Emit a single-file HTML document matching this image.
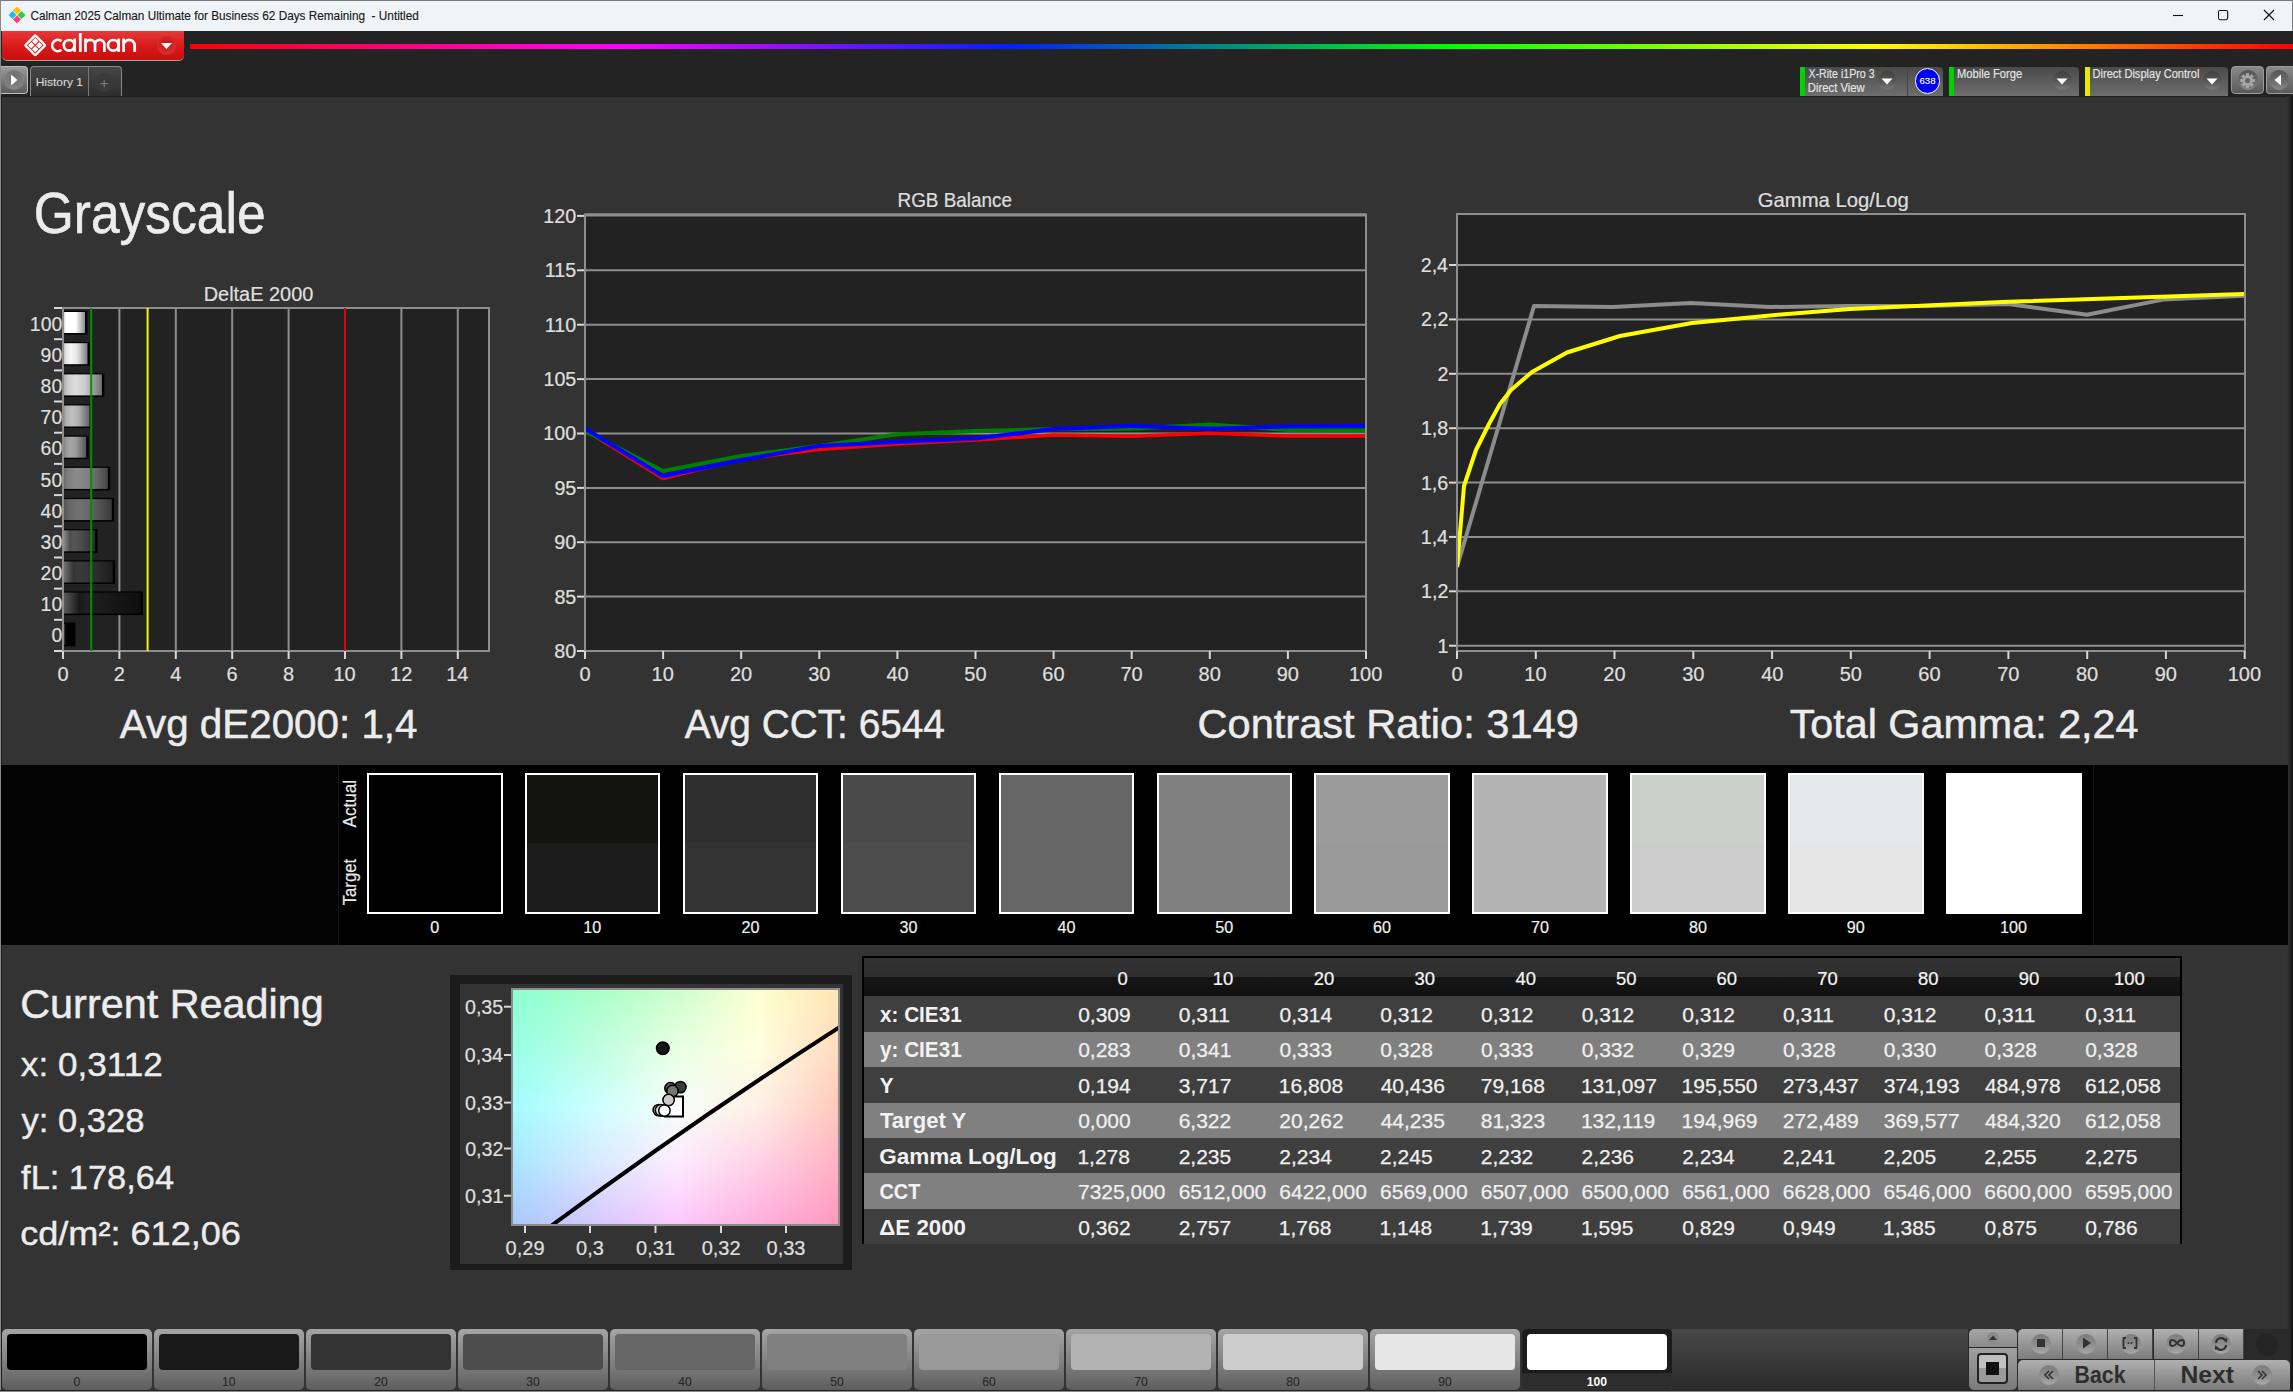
<!DOCTYPE html>
<html><head><meta charset="utf-8"><title>Calman</title>
<style>
*{margin:0;padding:0;box-sizing:border-box}
html,body{width:2293px;height:1392px;overflow:hidden;background:#333;font-family:"Liberation Sans", sans-serif}
.abs{position:absolute}
.t{position:absolute;white-space:nowrap;line-height:1}
</style></head><body>

<div class="abs" style="left:0;top:0;width:2293px;height:31px;background:#eff4f9;border-top:1px solid #7a7a7a;border-left:1px solid #8a8a8a"></div>
<svg class="abs" style="left:8px;top:6px" width="18" height="18" viewBox="0 0 18 18">
<path d="M9 0.5 L13 4.5 L9 8.5 L5 4.5Z" fill="#ffc000"/>
<path d="M4.5 5 L8.5 9 L4.5 13 L0.5 9Z" fill="#29b6f6"/>
<path d="M13.5 5 L17.5 9 L13.5 13 L9.5 9Z" fill="#2ecc40"/>
<path d="M9 9.5 L13 13.5 L9 17.5 L5 13.5Z" fill="#ff3d7f"/>
</svg>
<svg class="abs" style="left:2160px;top:0" width="133" height="31" viewBox="2160 0 133 31">
<line x1="2173" y1="15.5" x2="2183" y2="15.5" stroke="#111" stroke-width="1.1"/>
<rect x="2218.5" y="10.5" width="9.2" height="9.2" rx="1.6" fill="none" stroke="#111" stroke-width="1.1"/>
<path d="M2264 10 L2274 20 M2274 10 L2264 20" stroke="#111" stroke-width="1.2"/>
</svg>
<div class="abs" style="left:2292px;top:0;width:1px;height:31px;background:#7a7a7a"></div>
<div class="abs" style="left:0;top:31px;width:2293px;height:65px;background:#232323"></div>
<div class="abs" style="left:2px;top:31px;width:182px;height:30px;border-radius:0 0 5px 5px;background:linear-gradient(#e43a3a,#d81818 55%,#c80f0f);border-bottom:1px solid #a0a0a0"></div>
<svg class="abs" style="left:0;top:31px" width="184" height="30" viewBox="0 31 184 30">
<g transform="translate(35.2,45.3) rotate(45)">
<rect x="-7.1" y="-7.1" width="14.2" height="14.2" fill="none" stroke="#fff" stroke-width="2.4" rx="0.8"/>
<rect x="-5.1" y="-5.1" width="4.6" height="4.6" fill="#fff"/>
<rect x="0.5" y="-5.1" width="4.6" height="4.6" fill="#fff"/>
<rect x="-5.1" y="0.5" width="4.6" height="4.6" fill="#fff"/>
<rect x="0.5" y="0.5" width="4.6" height="4.6" fill="#fff"/>
</g>
<g fill="none" stroke="#fff" stroke-width="2.7">
<path d="M61.48 41.12 A5.65 5.65 0 1 0 61.48 49.78"/>
<circle cx="69.1" cy="45.3" r="5.3"/><path d="M74.6 38.6 V51.9"/>
<path d="M80.3 33 V51.9"/>
<path d="M85.5 38.6 V51.9 M85.5 44.6 A4.75 4.75 0 0 1 95 44.6 V51.9 M95 44.6 A4.7 4.7 0 0 1 104.4 44.6 V51.9"/>
<circle cx="113.3" cy="45.3" r="5.3"/><path d="M118.7 38.6 V51.9"/>
<path d="M123.6 38.6 V51.9 M123.6 45.35 A5.55 5.55 0 0 1 134.7 45.35 V51.9"/>
</g></svg>
<div class="abs" style="left:157px;top:36px;width:19px;height:19px;border-radius:50%;background:radial-gradient(circle at 50% 35%,#c81818,#e23535)"></div>
<svg class="abs" style="left:160px;top:42px" width="13" height="8"><path d="M1 1 L12 1 L6.5 7Z" fill="#fff"/></svg>
<div class="abs" style="left:190px;top:43.5px;width:2103px;height:5px;background:linear-gradient(90deg,#ff0000 0%,#ff00ff 20.4%,#0020ff 39%,#00ff00 60%,#ffff00 80%,#ff0000 100%)"></div>
<div class="abs" style="left:0;top:66px;width:28px;height:28px;border-radius:0 4px 4px 0;background:linear-gradient(#9a9a9a,#5c5c5c);border:1px solid #bdbdbd;border-left:none"></div>
<div class="abs" style="left:4px;top:70px;width:20px;height:20px;border-radius:50%;background:radial-gradient(circle at 50% 30%,#6e6e6e,#8a8a8a)"></div>
<svg class="abs" style="left:10px;top:74px" width="8" height="12"><path d="M1 0.5 L7.5 6 L1 11.5Z" fill="#fff"/></svg>
<div class="abs" style="left:30px;top:66px;width:92px;height:30px;border-radius:4px 4px 0 0;background:linear-gradient(#464646,#2e2e2e);border:1px solid #8a8a8a;border-bottom:none"></div>
<div class="abs" style="left:88px;top:67px;width:1px;height:29px;background:#7a7a7a"></div>
<div class="abs" style="left:95px;top:73px;width:19px;height:19px;border-radius:50%;background:#3a3a3a"></div>
<svg class="abs" style="left:99px;top:78px" width="11" height="11"><path d="M5.2 2 V9.3 M1.6 5.6 H8.8" stroke="#858585" stroke-width="1"/></svg>
<div class="abs" style="left:1800px;top:66.5px;width:143px;height:29.5px;border-radius:4px 4px 0 0;background:linear-gradient(#4a4a4a,#6e6e6e)"></div>
<div class="abs" style="left:1800px;top:67px;width:5px;height:29px;background:#00d400"></div>
<div class="abs" style="left:1877.5px;top:71px;width:19px;height:19px;border-radius:50%;background:linear-gradient(#404040,#5a5a5a 60%,#7a7a7a)"></div>
<svg class="abs" style="left:1881px;top:78px" width="12" height="7"><path d="M0.5 0.5 L11.5 0.5 L6 6.5Z" fill="#fff"/></svg>
<div class="abs" style="left:1907px;top:69px;width:1px;height:27px;background:#444"></div>
<div class="abs" style="left:1914.5px;top:68px;width:25.5px;height:25.5px;border-radius:50%;background:#0000f0;border:1px solid #fff"></div>
<div class="abs" style="left:1949px;top:66.5px;width:130px;height:29.5px;border-radius:4px 4px 0 0;background:linear-gradient(#4a4a4a,#6e6e6e)"></div>
<div class="abs" style="left:1949px;top:67px;width:5px;height:29px;background:#00d400"></div>
<div class="abs" style="left:2052.5px;top:71px;width:19px;height:19px;border-radius:50%;background:linear-gradient(#404040,#5a5a5a 60%,#7a7a7a)"></div>
<svg class="abs" style="left:2056px;top:78px" width="12" height="7"><path d="M0.5 0.5 L11.5 0.5 L6 6.5Z" fill="#fff"/></svg>
<div class="abs" style="left:2085px;top:66.5px;width:143px;height:29.5px;border-radius:4px 4px 0 0;background:linear-gradient(#4a4a4a,#6e6e6e)"></div>
<div class="abs" style="left:2085px;top:67px;width:5px;height:29px;background:#e8e800"></div>
<div class="abs" style="left:2202.5px;top:71px;width:19px;height:19px;border-radius:50%;background:linear-gradient(#404040,#5a5a5a 60%,#7a7a7a)"></div>
<svg class="abs" style="left:2206px;top:78px" width="12" height="7"><path d="M0.5 0.5 L11.5 0.5 L6 6.5Z" fill="#fff"/></svg>
<div class="abs" style="left:2231px;top:66px;width:33px;height:28px;border-radius:4px;background:linear-gradient(#8a8a8a,#5a5a5a);border:1px solid #9a9a9a"></div>
<div class="abs" style="left:2237.5px;top:70px;width:20px;height:20px;border-radius:50%;background:linear-gradient(#555,#6e6e6e 60%,#8a8a8a)"></div>
<svg class="abs" style="left:2238px;top:71px" width="19" height="19" viewBox="-9.5 -9.5 19 19">
<g fill="#a8a8a8"><circle r="5.2"/>
<rect x="-1.5" y="-7.3" width="3" height="3.5" transform="rotate(0)"/><rect x="-1.5" y="-7.3" width="3" height="3.5" transform="rotate(45)"/><rect x="-1.5" y="-7.3" width="3" height="3.5" transform="rotate(90)"/><rect x="-1.5" y="-7.3" width="3" height="3.5" transform="rotate(135)"/><rect x="-1.5" y="-7.3" width="3" height="3.5" transform="rotate(180)"/><rect x="-1.5" y="-7.3" width="3" height="3.5" transform="rotate(225)"/><rect x="-1.5" y="-7.3" width="3" height="3.5" transform="rotate(270)"/><rect x="-1.5" y="-7.3" width="3" height="3.5" transform="rotate(315)"/>
</g><circle r="2.6" fill="#666"/></svg>
<div class="abs" style="left:2266px;top:66px;width:27px;height:28px;border-radius:4px 0 0 4px;background:linear-gradient(#8a8a8a,#5a5a5a);border:1px solid #9a9a9a;border-right:none"></div>
<div class="abs" style="left:2269px;top:70px;width:20px;height:20px;border-radius:50%;background:linear-gradient(#555,#6e6e6e 60%,#8a8a8a)"></div>
<svg class="abs" style="left:2274px;top:74px" width="8" height="12"><path d="M7 0.5 L0.5 6 L7 11.5Z" fill="#fff"/></svg>
<div class="abs" style="left:0;top:96px;width:2293px;height:1296px;background:#333"></div>
<div class="abs" style="left:0;top:31px;width:1px;height:1361px;background:#8a8a8a"></div>
<div class="abs" style="left:1px;top:96px;width:1px;height:1296px;background:#1e1e1e"></div>
<div class="abs" style="left:1px;top:96px;width:2292px;height:1px;background:#1e1e1e"></div>
<div class="abs" style="left:2287px;top:96px;width:6px;height:1296px;background:linear-gradient(90deg,#333,#262626 50%,#111)"></div>
<svg class="abs" style="left:0;top:0" width="2293" height="760" viewBox="0 0 2293 760">
<rect x="63" y="308" width="426" height="343" fill="#222"/>
<line x1="119.4" y1="308" x2="119.4" y2="651" stroke="#8e8e8e" stroke-width="2"/>
<line x1="175.8" y1="308" x2="175.8" y2="651" stroke="#8e8e8e" stroke-width="2"/>
<line x1="232.2" y1="308" x2="232.2" y2="651" stroke="#8e8e8e" stroke-width="2"/>
<line x1="288.6" y1="308" x2="288.6" y2="651" stroke="#8e8e8e" stroke-width="2"/>
<line x1="345.0" y1="308" x2="345.0" y2="651" stroke="#8e8e8e" stroke-width="2"/>
<line x1="401.4" y1="308" x2="401.4" y2="651" stroke="#8e8e8e" stroke-width="2"/>
<line x1="457.8" y1="308" x2="457.8" y2="651" stroke="#8e8e8e" stroke-width="2"/>
<defs>
<linearGradient id="bg0" x1="0" x2="1" y1="0" y2="0"><stop offset="0" stop-color="rgb(70,70,70)"/><stop offset="0.2" stop-color="rgb(0,0,0)"/><stop offset="0.3" stop-color="rgb(6,6,6)"/><stop offset="0.55" stop-color="rgb(0,0,0)"/><stop offset="1" stop-color="rgb(0,0,0)"/></linearGradient>
<linearGradient id="bg1" x1="0" x2="1" y1="0" y2="0"><stop offset="0" stop-color="rgb(91,91,91)"/><stop offset="0.2" stop-color="rgb(25,25,25)"/><stop offset="0.3" stop-color="rgb(32,32,32)"/><stop offset="0.55" stop-color="rgb(25,25,25)"/><stop offset="1" stop-color="rgb(14,14,14)"/></linearGradient>
<linearGradient id="bg2" x1="0" x2="1" y1="0" y2="0"><stop offset="0" stop-color="rgb(113,113,113)"/><stop offset="0.2" stop-color="rgb(51,51,51)"/><stop offset="0.3" stop-color="rgb(59,59,59)"/><stop offset="0.55" stop-color="rgb(51,51,51)"/><stop offset="1" stop-color="rgb(28,28,28)"/></linearGradient>
<linearGradient id="bg3" x1="0" x2="1" y1="0" y2="0"><stop offset="0" stop-color="rgb(135,135,135)"/><stop offset="0.2" stop-color="rgb(76,76,76)"/><stop offset="0.3" stop-color="rgb(86,86,86)"/><stop offset="0.55" stop-color="rgb(76,76,76)"/><stop offset="1" stop-color="rgb(42,42,42)"/></linearGradient>
<linearGradient id="bg4" x1="0" x2="1" y1="0" y2="0"><stop offset="0" stop-color="rgb(86,86,86)"/><stop offset="0.1" stop-color="rgb(102,102,102)"/><stop offset="0.3" stop-color="rgb(113,113,113)"/><stop offset="0.55" stop-color="rgb(102,102,102)"/><stop offset="1" stop-color="rgb(56,56,56)"/></linearGradient>
<linearGradient id="bg5" x1="0" x2="1" y1="0" y2="0"><stop offset="0" stop-color="rgb(108,108,108)"/><stop offset="0.1" stop-color="rgb(127,127,127)"/><stop offset="0.3" stop-color="rgb(139,139,139)"/><stop offset="0.55" stop-color="rgb(127,127,127)"/><stop offset="1" stop-color="rgb(70,70,70)"/></linearGradient>
<linearGradient id="bg6" x1="0" x2="1" y1="0" y2="0"><stop offset="0" stop-color="rgb(130,130,130)"/><stop offset="0.1" stop-color="rgb(153,153,153)"/><stop offset="0.3" stop-color="rgb(166,166,166)"/><stop offset="0.55" stop-color="rgb(153,153,153)"/><stop offset="1" stop-color="rgb(84,84,84)"/></linearGradient>
<linearGradient id="bg7" x1="0" x2="1" y1="0" y2="0"><stop offset="0" stop-color="rgb(151,151,151)"/><stop offset="0.1" stop-color="rgb(178,178,178)"/><stop offset="0.3" stop-color="rgb(193,193,193)"/><stop offset="0.55" stop-color="rgb(178,178,178)"/><stop offset="1" stop-color="rgb(98,98,98)"/></linearGradient>
<linearGradient id="bg8" x1="0" x2="1" y1="0" y2="0"><stop offset="0" stop-color="rgb(173,173,173)"/><stop offset="0.1" stop-color="rgb(204,204,204)"/><stop offset="0.3" stop-color="rgb(220,220,220)"/><stop offset="0.55" stop-color="rgb(204,204,204)"/><stop offset="1" stop-color="rgb(112,112,112)"/></linearGradient>
<linearGradient id="bg9" x1="0" x2="1" y1="0" y2="0"><stop offset="0" stop-color="rgb(195,195,195)"/><stop offset="0.1" stop-color="rgb(229,229,229)"/><stop offset="0.3" stop-color="rgb(246,246,246)"/><stop offset="0.55" stop-color="rgb(229,229,229)"/><stop offset="1" stop-color="rgb(126,126,126)"/></linearGradient>
<linearGradient id="bg10" x1="0" x2="1" y1="0" y2="0"><stop offset="0" stop-color="rgb(216,216,216)"/><stop offset="0.1" stop-color="rgb(255,255,255)"/><stop offset="0.3" stop-color="rgb(255,255,255)"/><stop offset="0.55" stop-color="rgb(255,255,255)"/><stop offset="1" stop-color="rgb(140,140,140)"/></linearGradient>
</defs>
<rect x="64" y="622.6" width="11.4" height="23.7" fill="#000"/>
<rect x="64" y="623.8" width="9.0" height="21" fill="url(#bg0)"/>
<rect x="64" y="591.4" width="78.9" height="23.7" fill="#000"/>
<rect x="64" y="592.6" width="76.5" height="21" fill="url(#bg1)"/>
<rect x="64" y="560.3" width="51.1" height="23.7" fill="#000"/>
<rect x="64" y="561.5" width="48.7" height="21" fill="url(#bg2)"/>
<rect x="64" y="529.1" width="33.6" height="23.7" fill="#000"/>
<rect x="64" y="530.3" width="31.2" height="21" fill="url(#bg3)"/>
<rect x="64" y="497.9" width="50.2" height="23.7" fill="#000"/>
<rect x="64" y="499.1" width="47.8" height="21" fill="url(#bg4)"/>
<rect x="64" y="466.7" width="46.2" height="23.7" fill="#000"/>
<rect x="64" y="467.9" width="43.8" height="21" fill="url(#bg5)"/>
<rect x="64" y="435.5" width="24.6" height="23.7" fill="#000"/>
<rect x="64" y="436.7" width="22.2" height="21" fill="url(#bg6)"/>
<rect x="64" y="404.3" width="28.0" height="23.7" fill="#000"/>
<rect x="64" y="405.5" width="25.6" height="21" fill="url(#bg7)"/>
<rect x="64" y="373.2" width="40.3" height="23.7" fill="#000"/>
<rect x="64" y="374.4" width="37.9" height="21" fill="url(#bg8)"/>
<rect x="64" y="342.0" width="25.9" height="23.7" fill="#000"/>
<rect x="64" y="343.2" width="23.5" height="21" fill="url(#bg9)"/>
<rect x="64" y="310.8" width="23.4" height="23.7" fill="#000"/>
<rect x="64" y="312.0" width="21.0" height="21" fill="url(#bg10)"/>
<rect x="63" y="308" width="426" height="343" fill="none" stroke="#8e8e8e" stroke-width="2"/>
<line x1="91.2" y1="308" x2="91.2" y2="651" stroke="#009000" stroke-width="2"/>
<line x1="147.6" y1="308" x2="147.6" y2="651" stroke="#f4f400" stroke-width="2"/>
<line x1="345.0" y1="308" x2="345.0" y2="651" stroke="#e40000" stroke-width="2"/>
<line x1="54" y1="651.0" x2="62" y2="651.0" stroke="#d8d8d8" stroke-width="2"/>
<line x1="54" y1="619.8" x2="62" y2="619.8" stroke="#d8d8d8" stroke-width="2"/>
<line x1="54" y1="588.6" x2="62" y2="588.6" stroke="#d8d8d8" stroke-width="2"/>
<line x1="54" y1="557.5" x2="62" y2="557.5" stroke="#d8d8d8" stroke-width="2"/>
<line x1="54" y1="526.3" x2="62" y2="526.3" stroke="#d8d8d8" stroke-width="2"/>
<line x1="54" y1="495.1" x2="62" y2="495.1" stroke="#d8d8d8" stroke-width="2"/>
<line x1="54" y1="463.9" x2="62" y2="463.9" stroke="#d8d8d8" stroke-width="2"/>
<line x1="54" y1="432.7" x2="62" y2="432.7" stroke="#d8d8d8" stroke-width="2"/>
<line x1="54" y1="401.5" x2="62" y2="401.5" stroke="#d8d8d8" stroke-width="2"/>
<line x1="54" y1="370.4" x2="62" y2="370.4" stroke="#d8d8d8" stroke-width="2"/>
<line x1="54" y1="339.2" x2="62" y2="339.2" stroke="#d8d8d8" stroke-width="2"/>
<line x1="54" y1="308.0" x2="62" y2="308.0" stroke="#d8d8d8" stroke-width="2"/>
<line x1="63.0" y1="651" x2="63.0" y2="659" stroke="#d8d8d8" stroke-width="2"/>
<line x1="119.4" y1="651" x2="119.4" y2="659" stroke="#d8d8d8" stroke-width="2"/>
<line x1="175.8" y1="651" x2="175.8" y2="659" stroke="#d8d8d8" stroke-width="2"/>
<line x1="232.2" y1="651" x2="232.2" y2="659" stroke="#d8d8d8" stroke-width="2"/>
<line x1="288.6" y1="651" x2="288.6" y2="659" stroke="#d8d8d8" stroke-width="2"/>
<line x1="345.0" y1="651" x2="345.0" y2="659" stroke="#d8d8d8" stroke-width="2"/>
<line x1="401.4" y1="651" x2="401.4" y2="659" stroke="#d8d8d8" stroke-width="2"/>
<line x1="457.8" y1="651" x2="457.8" y2="659" stroke="#d8d8d8" stroke-width="2"/>
<rect x="585" y="214" width="781" height="437" fill="#222"/>
<line x1="585" y1="596.6" x2="1366" y2="596.6" stroke="#8e8e8e" stroke-width="2"/>
<line x1="585" y1="542.2" x2="1366" y2="542.2" stroke="#8e8e8e" stroke-width="2"/>
<line x1="585" y1="487.9" x2="1366" y2="487.9" stroke="#8e8e8e" stroke-width="2"/>
<line x1="585" y1="433.5" x2="1366" y2="433.5" stroke="#8e8e8e" stroke-width="2"/>
<line x1="585" y1="379.1" x2="1366" y2="379.1" stroke="#8e8e8e" stroke-width="2"/>
<line x1="585" y1="324.7" x2="1366" y2="324.7" stroke="#8e8e8e" stroke-width="2"/>
<line x1="585" y1="270.3" x2="1366" y2="270.3" stroke="#8e8e8e" stroke-width="2"/>
<rect x="585" y="214.5" width="781" height="436.5" fill="none" stroke="#8e8e8e" stroke-width="2"/>
<line x1="585" y1="215" x2="1366" y2="215" stroke="#8e8e8e" stroke-width="3"/>
<line x1="577" y1="651.0" x2="584" y2="651.0" stroke="#d8d8d8" stroke-width="2"/>
<line x1="577" y1="596.6" x2="584" y2="596.6" stroke="#d8d8d8" stroke-width="2"/>
<line x1="577" y1="542.2" x2="584" y2="542.2" stroke="#d8d8d8" stroke-width="2"/>
<line x1="577" y1="487.9" x2="584" y2="487.9" stroke="#d8d8d8" stroke-width="2"/>
<line x1="577" y1="433.5" x2="584" y2="433.5" stroke="#d8d8d8" stroke-width="2"/>
<line x1="577" y1="379.1" x2="584" y2="379.1" stroke="#d8d8d8" stroke-width="2"/>
<line x1="577" y1="324.7" x2="584" y2="324.7" stroke="#d8d8d8" stroke-width="2"/>
<line x1="577" y1="270.3" x2="584" y2="270.3" stroke="#d8d8d8" stroke-width="2"/>
<line x1="577" y1="215.9" x2="584" y2="215.9" stroke="#d8d8d8" stroke-width="2"/>
<line x1="585.0" y1="651" x2="585.0" y2="659" stroke="#d8d8d8" stroke-width="2"/>
<line x1="663.1" y1="651" x2="663.1" y2="659" stroke="#d8d8d8" stroke-width="2"/>
<line x1="741.2" y1="651" x2="741.2" y2="659" stroke="#d8d8d8" stroke-width="2"/>
<line x1="819.3" y1="651" x2="819.3" y2="659" stroke="#d8d8d8" stroke-width="2"/>
<line x1="897.4" y1="651" x2="897.4" y2="659" stroke="#d8d8d8" stroke-width="2"/>
<line x1="975.5" y1="651" x2="975.5" y2="659" stroke="#d8d8d8" stroke-width="2"/>
<line x1="1053.6" y1="651" x2="1053.6" y2="659" stroke="#d8d8d8" stroke-width="2"/>
<line x1="1131.7" y1="651" x2="1131.7" y2="659" stroke="#d8d8d8" stroke-width="2"/>
<line x1="1209.8" y1="651" x2="1209.8" y2="659" stroke="#d8d8d8" stroke-width="2"/>
<line x1="1287.9" y1="651" x2="1287.9" y2="659" stroke="#d8d8d8" stroke-width="2"/>
<line x1="1366.0" y1="651" x2="1366.0" y2="659" stroke="#d8d8d8" stroke-width="2"/>
<svg x="586" y="214" width="779" height="437" viewBox="586 214 779 437" overflow="hidden">
<polyline points="585.0,430.0 663.1,478.5 741.2,459.0 819.3,449.4 897.4,444.0 975.5,440.0 1053.6,435.0 1131.7,436.3 1209.8,433.3 1287.9,436.0 1366.0,435.9" fill="none" stroke="#ff0000" stroke-width="3.5" stroke-linejoin="round"/>
<polyline points="585.0,431.0 663.1,471.0 741.2,455.9 819.3,446.0 897.4,434.3 975.5,431.0 1053.6,429.0 1131.7,428.7 1209.8,424.4 1287.9,430.0 1366.0,430.6" fill="none" stroke="#008000" stroke-width="4" stroke-linejoin="round"/>
<polyline points="585.0,428.5 663.1,476.3 741.2,460.0 819.3,446.0 897.4,441.9 975.5,438.6 1053.6,429.0 1131.7,426.0 1209.8,428.7 1287.9,426.5 1366.0,426.0" fill="none" stroke="#0000ff" stroke-width="4" stroke-linejoin="round"/>
</svg>
<rect x="1457" y="214" width="788" height="437" fill="#222"/>
<line x1="1457" y1="645.7" x2="2245" y2="645.7" stroke="#8e8e8e" stroke-width="2"/>
<line x1="1457" y1="591.3" x2="2245" y2="591.3" stroke="#8e8e8e" stroke-width="2"/>
<line x1="1457" y1="536.9" x2="2245" y2="536.9" stroke="#8e8e8e" stroke-width="2"/>
<line x1="1457" y1="482.6" x2="2245" y2="482.6" stroke="#8e8e8e" stroke-width="2"/>
<line x1="1457" y1="428.2" x2="2245" y2="428.2" stroke="#8e8e8e" stroke-width="2"/>
<line x1="1457" y1="373.8" x2="2245" y2="373.8" stroke="#8e8e8e" stroke-width="2"/>
<line x1="1457" y1="319.4" x2="2245" y2="319.4" stroke="#8e8e8e" stroke-width="2"/>
<line x1="1457" y1="265.0" x2="2245" y2="265.0" stroke="#8e8e8e" stroke-width="2"/>
<rect x="1457" y="214" width="788" height="437" fill="none" stroke="#8e8e8e" stroke-width="2"/>
<line x1="1449" y1="645.7" x2="1456" y2="645.7" stroke="#d8d8d8" stroke-width="2"/>
<line x1="1449" y1="591.3" x2="1456" y2="591.3" stroke="#d8d8d8" stroke-width="2"/>
<line x1="1449" y1="536.9" x2="1456" y2="536.9" stroke="#d8d8d8" stroke-width="2"/>
<line x1="1449" y1="482.6" x2="1456" y2="482.6" stroke="#d8d8d8" stroke-width="2"/>
<line x1="1449" y1="428.2" x2="1456" y2="428.2" stroke="#d8d8d8" stroke-width="2"/>
<line x1="1449" y1="373.8" x2="1456" y2="373.8" stroke="#d8d8d8" stroke-width="2"/>
<line x1="1449" y1="319.4" x2="1456" y2="319.4" stroke="#d8d8d8" stroke-width="2"/>
<line x1="1449" y1="265.0" x2="1456" y2="265.0" stroke="#d8d8d8" stroke-width="2"/>
<line x1="1457.0" y1="651" x2="1457.0" y2="659" stroke="#d8d8d8" stroke-width="2"/>
<line x1="1535.8" y1="651" x2="1535.8" y2="659" stroke="#d8d8d8" stroke-width="2"/>
<line x1="1614.5" y1="651" x2="1614.5" y2="659" stroke="#d8d8d8" stroke-width="2"/>
<line x1="1693.3" y1="651" x2="1693.3" y2="659" stroke="#d8d8d8" stroke-width="2"/>
<line x1="1772.1" y1="651" x2="1772.1" y2="659" stroke="#d8d8d8" stroke-width="2"/>
<line x1="1850.8" y1="651" x2="1850.8" y2="659" stroke="#d8d8d8" stroke-width="2"/>
<line x1="1929.6" y1="651" x2="1929.6" y2="659" stroke="#d8d8d8" stroke-width="2"/>
<line x1="2008.4" y1="651" x2="2008.4" y2="659" stroke="#d8d8d8" stroke-width="2"/>
<line x1="2087.2" y1="651" x2="2087.2" y2="659" stroke="#d8d8d8" stroke-width="2"/>
<line x1="2165.9" y1="651" x2="2165.9" y2="659" stroke="#d8d8d8" stroke-width="2"/>
<line x1="2244.7" y1="651" x2="2244.7" y2="659" stroke="#d8d8d8" stroke-width="2"/>
<svg x="1458" y="214" width="786" height="437" viewBox="1458 214 786 437" overflow="hidden">
<polyline points="1457,567 1534,306 1613,307 1691,303 1770,307 1849,306 1927,306 2008,304 2087,314.7 2163,299.6 2245,295.7" fill="none" stroke="#8c8c8c" stroke-width="4" stroke-linejoin="round"/>
<polyline points="1457,567 1459,545 1464,486 1476,450 1489,424 1500,404 1511,390 1532,372 1567,352.5 1620,336 1692,323 1778,314.7 1850,309 2008,301.8 2245,294" fill="none" stroke="#ffff00" stroke-width="4" stroke-linejoin="round"/>
</svg>
</svg>
<div class="abs" style="left:1px;top:765px;width:2287px;height:180px;background:#030303"></div>
<div class="abs" style="left:338px;top:765px;width:1756px;height:180px;background:#000;border-left:1px solid #151515;border-right:1px solid #151515"></div>
<div class="abs" style="left:367.0px;top:773px;width:135.5px;height:141px;border:2px solid #fff;background:linear-gradient(#000000 50%,#000000 50%)"></div>
<div class="abs" style="left:524.9px;top:773px;width:135.5px;height:141px;border:2px solid #fff;background:linear-gradient(#131412 50%,#1c1c1c 50%)"></div>
<div class="abs" style="left:682.8px;top:773px;width:135.5px;height:141px;border:2px solid #fff;background:linear-gradient(#2f2f2f 50%,#333333 50%)"></div>
<div class="abs" style="left:840.7px;top:773px;width:135.5px;height:141px;border:2px solid #fff;background:linear-gradient(#4a4a4a 50%,#4d4d4d 50%)"></div>
<div class="abs" style="left:998.6px;top:773px;width:135.5px;height:141px;border:2px solid #fff;background:linear-gradient(#656665 50%,#666666 50%)"></div>
<div class="abs" style="left:1156.5px;top:773px;width:135.5px;height:141px;border:2px solid #fff;background:linear-gradient(#7f807f 50%,#808080 50%)"></div>
<div class="abs" style="left:1314.4px;top:773px;width:135.5px;height:141px;border:2px solid #fff;background:linear-gradient(#9a9b9a 50%,#999999 50%)"></div>
<div class="abs" style="left:1472.3px;top:773px;width:135.5px;height:141px;border:2px solid #fff;background:linear-gradient(#b3b3b3 50%,#b3b3b3 50%)"></div>
<div class="abs" style="left:1630.2px;top:773px;width:135.5px;height:141px;border:2px solid #fff;background:linear-gradient(#cdcfcd 50%,#cccccc 50%)"></div>
<div class="abs" style="left:1788.1px;top:773px;width:135.5px;height:141px;border:2px solid #fff;background:linear-gradient(#e6e7e8 50%,#e6e6e6 50%)"></div>
<div class="abs" style="left:1946.0px;top:773px;width:135.5px;height:141px;border:2px solid #fff;background:linear-gradient(#ffffff 50%,#ffffff 50%)"></div>
<div class="abs" style="left:450px;top:975px;width:402px;height:295px;background:#1c1c1c"></div>
<div class="abs" style="left:460px;top:984px;width:383px;height:280px;background:#333"></div>
<svg class="abs" style="left:450px;top:975px" width="402" height="295" viewBox="450 975 402 295">
<defs>
<linearGradient id="cs0"><stop offset="0.00" stop-color="#8cffd3"/><stop offset="0.25" stop-color="#a9ffc9"/><stop offset="0.50" stop-color="#cdffcd"/><stop offset="0.75" stop-color="#fdffd0"/><stop offset="1.00" stop-color="#ffe6b4"/></linearGradient>
<linearGradient id="cs1"><stop offset="0.00" stop-color="#8dffd4"/><stop offset="0.25" stop-color="#aaffca"/><stop offset="0.50" stop-color="#ceffce"/><stop offset="0.75" stop-color="#fdffd1"/><stop offset="1.00" stop-color="#ffe5b5"/></linearGradient>
<linearGradient id="cs2"><stop offset="0.00" stop-color="#8effd5"/><stop offset="0.25" stop-color="#abffcb"/><stop offset="0.50" stop-color="#d0ffcf"/><stop offset="0.75" stop-color="#fdffd2"/><stop offset="1.00" stop-color="#ffe5b6"/></linearGradient>
<linearGradient id="cs3"><stop offset="0.00" stop-color="#8effd6"/><stop offset="0.25" stop-color="#acffcc"/><stop offset="0.50" stop-color="#d1ffd0"/><stop offset="0.75" stop-color="#fdffd3"/><stop offset="1.00" stop-color="#ffe4b6"/></linearGradient>
<linearGradient id="cs4"><stop offset="0.00" stop-color="#8fffd7"/><stop offset="0.25" stop-color="#adffcd"/><stop offset="0.50" stop-color="#d2ffd1"/><stop offset="0.75" stop-color="#fdffd4"/><stop offset="1.00" stop-color="#ffe4b7"/></linearGradient>
<linearGradient id="cs5"><stop offset="0.00" stop-color="#8fffd8"/><stop offset="0.25" stop-color="#aeffcf"/><stop offset="0.50" stop-color="#d4ffd3"/><stop offset="0.75" stop-color="#feffd4"/><stop offset="1.00" stop-color="#ffe3b7"/></linearGradient>
<linearGradient id="cs6"><stop offset="0.00" stop-color="#90ffd9"/><stop offset="0.25" stop-color="#afffd0"/><stop offset="0.50" stop-color="#d5ffd4"/><stop offset="0.75" stop-color="#feffd5"/><stop offset="1.00" stop-color="#ffe3b8"/></linearGradient>
<linearGradient id="cs7"><stop offset="0.00" stop-color="#91ffda"/><stop offset="0.25" stop-color="#b0ffd1"/><stop offset="0.50" stop-color="#d7ffd5"/><stop offset="0.75" stop-color="#feffd6"/><stop offset="1.00" stop-color="#ffe2b9"/></linearGradient>
<linearGradient id="cs8"><stop offset="0.00" stop-color="#91ffdb"/><stop offset="0.25" stop-color="#b1ffd2"/><stop offset="0.50" stop-color="#d8ffd6"/><stop offset="0.75" stop-color="#feffd7"/><stop offset="1.00" stop-color="#ffe2b9"/></linearGradient>
<linearGradient id="cs9"><stop offset="0.00" stop-color="#92ffdc"/><stop offset="0.25" stop-color="#b2ffd4"/><stop offset="0.50" stop-color="#daffd8"/><stop offset="0.75" stop-color="#feffd8"/><stop offset="1.00" stop-color="#ffe1ba"/></linearGradient>
<linearGradient id="cs10"><stop offset="0.00" stop-color="#92ffdd"/><stop offset="0.25" stop-color="#b3ffd5"/><stop offset="0.50" stop-color="#dbffd9"/><stop offset="0.75" stop-color="#feffd9"/><stop offset="1.00" stop-color="#ffe1ba"/></linearGradient>
<linearGradient id="cs11"><stop offset="0.00" stop-color="#93ffde"/><stop offset="0.25" stop-color="#b4ffd6"/><stop offset="0.50" stop-color="#dcffda"/><stop offset="0.75" stop-color="#feffd9"/><stop offset="1.00" stop-color="#ffe0bb"/></linearGradient>
<linearGradient id="cs12"><stop offset="0.00" stop-color="#94ffdf"/><stop offset="0.25" stop-color="#b5ffd7"/><stop offset="0.50" stop-color="#deffdb"/><stop offset="0.75" stop-color="#feffda"/><stop offset="1.00" stop-color="#ffe0bc"/></linearGradient>
<linearGradient id="cs13"><stop offset="0.00" stop-color="#94ffe0"/><stop offset="0.25" stop-color="#b6ffd8"/><stop offset="0.50" stop-color="#dfffdc"/><stop offset="0.75" stop-color="#feffdb"/><stop offset="1.00" stop-color="#ffdfbc"/></linearGradient>
<linearGradient id="cs14"><stop offset="0.00" stop-color="#95ffe1"/><stop offset="0.25" stop-color="#b7ffda"/><stop offset="0.50" stop-color="#e1ffde"/><stop offset="0.75" stop-color="#feffdc"/><stop offset="1.00" stop-color="#ffdfbd"/></linearGradient>
<linearGradient id="cs15"><stop offset="0.00" stop-color="#95ffe2"/><stop offset="0.25" stop-color="#b8ffdb"/><stop offset="0.50" stop-color="#e2ffdf"/><stop offset="0.75" stop-color="#ffffdd"/><stop offset="1.00" stop-color="#ffdebd"/></linearGradient>
<linearGradient id="cs16"><stop offset="0.00" stop-color="#96ffe3"/><stop offset="0.25" stop-color="#b9ffdc"/><stop offset="0.50" stop-color="#e3ffe0"/><stop offset="0.75" stop-color="#ffffdd"/><stop offset="1.00" stop-color="#ffdebe"/></linearGradient>
<linearGradient id="cs17"><stop offset="0.00" stop-color="#97ffe4"/><stop offset="0.25" stop-color="#baffdd"/><stop offset="0.50" stop-color="#e5ffe1"/><stop offset="0.75" stop-color="#ffffde"/><stop offset="1.00" stop-color="#ffddbf"/></linearGradient>
<linearGradient id="cs18"><stop offset="0.00" stop-color="#97ffe5"/><stop offset="0.25" stop-color="#bbffdf"/><stop offset="0.50" stop-color="#e6ffe3"/><stop offset="0.75" stop-color="#ffffdf"/><stop offset="1.00" stop-color="#ffddbf"/></linearGradient>
<linearGradient id="cs19"><stop offset="0.00" stop-color="#98ffe6"/><stop offset="0.25" stop-color="#bcffe0"/><stop offset="0.50" stop-color="#e8ffe4"/><stop offset="0.75" stop-color="#ffffe0"/><stop offset="1.00" stop-color="#ffdcc0"/></linearGradient>
<linearGradient id="cs20"><stop offset="0.00" stop-color="#99ffe7"/><stop offset="0.25" stop-color="#bdffe1"/><stop offset="0.50" stop-color="#e9ffe5"/><stop offset="0.75" stop-color="#fffee0"/><stop offset="1.00" stop-color="#ffdbc0"/></linearGradient>
<linearGradient id="cs21"><stop offset="0.00" stop-color="#99ffe8"/><stop offset="0.25" stop-color="#bdffe3"/><stop offset="0.50" stop-color="#e9ffe6"/><stop offset="0.75" stop-color="#fffee1"/><stop offset="1.00" stop-color="#ffdac0"/></linearGradient>
<linearGradient id="cs22"><stop offset="0.00" stop-color="#9affea"/><stop offset="0.25" stop-color="#beffe4"/><stop offset="0.50" stop-color="#eaffe7"/><stop offset="0.75" stop-color="#fffde1"/><stop offset="1.00" stop-color="#ffd9bf"/></linearGradient>
<linearGradient id="cs23"><stop offset="0.00" stop-color="#9afeeb"/><stop offset="0.25" stop-color="#bfffe6"/><stop offset="0.50" stop-color="#ebffe8"/><stop offset="0.75" stop-color="#fffce1"/><stop offset="1.00" stop-color="#ffd8bf"/></linearGradient>
<linearGradient id="cs24"><stop offset="0.00" stop-color="#9bfeec"/><stop offset="0.25" stop-color="#c0ffe8"/><stop offset="0.50" stop-color="#ebffe9"/><stop offset="0.75" stop-color="#fffbe1"/><stop offset="1.00" stop-color="#ffd7bf"/></linearGradient>
<linearGradient id="cs25"><stop offset="0.00" stop-color="#9cfeed"/><stop offset="0.25" stop-color="#c1ffe9"/><stop offset="0.50" stop-color="#ecffea"/><stop offset="0.75" stop-color="#fffbe2"/><stop offset="1.00" stop-color="#ffd6bf"/></linearGradient>
<linearGradient id="cs26"><stop offset="0.00" stop-color="#9cfeef"/><stop offset="0.25" stop-color="#c2ffeb"/><stop offset="0.50" stop-color="#edffeb"/><stop offset="0.75" stop-color="#fffae2"/><stop offset="1.00" stop-color="#ffd5bf"/></linearGradient>
<linearGradient id="cs27"><stop offset="0.00" stop-color="#9dfef0"/><stop offset="0.25" stop-color="#c2ffec"/><stop offset="0.50" stop-color="#eeffec"/><stop offset="0.75" stop-color="#fff9e2"/><stop offset="1.00" stop-color="#ffd4be"/></linearGradient>
<linearGradient id="cs28"><stop offset="0.00" stop-color="#9dfef1"/><stop offset="0.25" stop-color="#c3ffee"/><stop offset="0.50" stop-color="#eeffed"/><stop offset="0.75" stop-color="#fff8e3"/><stop offset="1.00" stop-color="#ffd3be"/></linearGradient>
<linearGradient id="cs29"><stop offset="0.00" stop-color="#9efef2"/><stop offset="0.25" stop-color="#c4fff0"/><stop offset="0.50" stop-color="#efffee"/><stop offset="0.75" stop-color="#fff8e3"/><stop offset="1.00" stop-color="#ffd2be"/></linearGradient>
<linearGradient id="cs30"><stop offset="0.00" stop-color="#9ffdf4"/><stop offset="0.25" stop-color="#c5fff1"/><stop offset="0.50" stop-color="#f0ffef"/><stop offset="0.75" stop-color="#fff7e3"/><stop offset="1.00" stop-color="#ffd1be"/></linearGradient>
<linearGradient id="cs31"><stop offset="0.00" stop-color="#9ffdf5"/><stop offset="0.25" stop-color="#c6fff3"/><stop offset="0.50" stop-color="#f0fff0"/><stop offset="0.75" stop-color="#fff6e4"/><stop offset="1.00" stop-color="#ffd0be"/></linearGradient>
<linearGradient id="cs32"><stop offset="0.00" stop-color="#a0fdf6"/><stop offset="0.25" stop-color="#c6fff4"/><stop offset="0.50" stop-color="#f1fff1"/><stop offset="0.75" stop-color="#fff5e4"/><stop offset="1.00" stop-color="#ffcfbd"/></linearGradient>
<linearGradient id="cs33"><stop offset="0.00" stop-color="#a0fdf8"/><stop offset="0.25" stop-color="#c7fff6"/><stop offset="0.50" stop-color="#f2fff2"/><stop offset="0.75" stop-color="#fff4e4"/><stop offset="1.00" stop-color="#ffcebd"/></linearGradient>
<linearGradient id="cs34"><stop offset="0.00" stop-color="#a1fdf9"/><stop offset="0.25" stop-color="#c8fff7"/><stop offset="0.50" stop-color="#f3fff3"/><stop offset="0.75" stop-color="#fff4e5"/><stop offset="1.00" stop-color="#ffcdbd"/></linearGradient>
<linearGradient id="cs35"><stop offset="0.00" stop-color="#a2fdfa"/><stop offset="0.25" stop-color="#c9fff9"/><stop offset="0.50" stop-color="#f3fff4"/><stop offset="0.75" stop-color="#fff3e5"/><stop offset="1.00" stop-color="#ffccbd"/></linearGradient>
<linearGradient id="cs36"><stop offset="0.00" stop-color="#a2fcfb"/><stop offset="0.25" stop-color="#cafffb"/><stop offset="0.50" stop-color="#f4fff5"/><stop offset="0.75" stop-color="#fff2e5"/><stop offset="1.00" stop-color="#ffcbbd"/></linearGradient>
<linearGradient id="cs37"><stop offset="0.00" stop-color="#a3fcfd"/><stop offset="0.25" stop-color="#cbfffc"/><stop offset="0.50" stop-color="#f5fff6"/><stop offset="0.75" stop-color="#fff1e5"/><stop offset="1.00" stop-color="#ffcabc"/></linearGradient>
<linearGradient id="cs38"><stop offset="0.00" stop-color="#a3fcfe"/><stop offset="0.25" stop-color="#cbfffe"/><stop offset="0.50" stop-color="#f5fff7"/><stop offset="0.75" stop-color="#fff1e6"/><stop offset="1.00" stop-color="#ffc9bc"/></linearGradient>
<linearGradient id="cs39"><stop offset="0.00" stop-color="#a4fcff"/><stop offset="0.25" stop-color="#ccffff"/><stop offset="0.50" stop-color="#f6fff8"/><stop offset="0.75" stop-color="#fff0e6"/><stop offset="1.00" stop-color="#ffc8bc"/></linearGradient>
<linearGradient id="cs40"><stop offset="0.00" stop-color="#a4fbff"/><stop offset="0.25" stop-color="#cdfeff"/><stop offset="0.50" stop-color="#f6fef8"/><stop offset="0.75" stop-color="#ffeee6"/><stop offset="1.00" stop-color="#ffc7bc"/></linearGradient>
<linearGradient id="cs41"><stop offset="0.00" stop-color="#a4f9ff"/><stop offset="0.25" stop-color="#cdfcff"/><stop offset="0.50" stop-color="#f7fdf9"/><stop offset="0.75" stop-color="#ffece6"/><stop offset="1.00" stop-color="#ffc5bd"/></linearGradient>
<linearGradient id="cs42"><stop offset="0.00" stop-color="#a5f8ff"/><stop offset="0.25" stop-color="#cefbff"/><stop offset="0.50" stop-color="#f7fcf9"/><stop offset="0.75" stop-color="#ffebe6"/><stop offset="1.00" stop-color="#ffc4bd"/></linearGradient>
<linearGradient id="cs43"><stop offset="0.00" stop-color="#a5f7ff"/><stop offset="0.25" stop-color="#cffaff"/><stop offset="0.50" stop-color="#f7fbf9"/><stop offset="0.75" stop-color="#ffe9e6"/><stop offset="1.00" stop-color="#ffc3be"/></linearGradient>
<linearGradient id="cs44"><stop offset="0.00" stop-color="#a5f6ff"/><stop offset="0.25" stop-color="#cff9ff"/><stop offset="0.50" stop-color="#f8f9fa"/><stop offset="0.75" stop-color="#ffe8e6"/><stop offset="1.00" stop-color="#ffc2be"/></linearGradient>
<linearGradient id="cs45"><stop offset="0.00" stop-color="#a5f4ff"/><stop offset="0.25" stop-color="#d0f8ff"/><stop offset="0.50" stop-color="#f8f8fa"/><stop offset="0.75" stop-color="#ffe6e6"/><stop offset="1.00" stop-color="#ffc0bf"/></linearGradient>
<linearGradient id="cs46"><stop offset="0.00" stop-color="#a5f3ff"/><stop offset="0.25" stop-color="#d0f7ff"/><stop offset="0.50" stop-color="#f8f7fb"/><stop offset="0.75" stop-color="#ffe4e6"/><stop offset="1.00" stop-color="#ffbfbf"/></linearGradient>
<linearGradient id="cs47"><stop offset="0.00" stop-color="#a6f2ff"/><stop offset="0.25" stop-color="#d1f5ff"/><stop offset="0.50" stop-color="#f8f6fb"/><stop offset="0.75" stop-color="#ffe3e6"/><stop offset="1.00" stop-color="#ffbebf"/></linearGradient>
<linearGradient id="cs48"><stop offset="0.00" stop-color="#a6f1ff"/><stop offset="0.25" stop-color="#d2f4ff"/><stop offset="0.50" stop-color="#f9f5fb"/><stop offset="0.75" stop-color="#ffe1e6"/><stop offset="1.00" stop-color="#ffbdc0"/></linearGradient>
<linearGradient id="cs49"><stop offset="0.00" stop-color="#a6f0ff"/><stop offset="0.25" stop-color="#d2f3ff"/><stop offset="0.50" stop-color="#f9f4fc"/><stop offset="0.75" stop-color="#ffdfe6"/><stop offset="1.00" stop-color="#ffbcc0"/></linearGradient>
<linearGradient id="cs50"><stop offset="0.00" stop-color="#a6eeff"/><stop offset="0.25" stop-color="#d3f2ff"/><stop offset="0.50" stop-color="#f9f3fc"/><stop offset="0.75" stop-color="#ffdee6"/><stop offset="1.00" stop-color="#ffbac1"/></linearGradient>
<linearGradient id="cs51"><stop offset="0.00" stop-color="#a6edff"/><stop offset="0.25" stop-color="#d3f1ff"/><stop offset="0.50" stop-color="#faf2fc"/><stop offset="0.75" stop-color="#ffdce6"/><stop offset="1.00" stop-color="#ffb9c1"/></linearGradient>
<linearGradient id="cs52"><stop offset="0.00" stop-color="#a7ecff"/><stop offset="0.25" stop-color="#d4f0ff"/><stop offset="0.50" stop-color="#faf1fd"/><stop offset="0.75" stop-color="#ffdbe6"/><stop offset="1.00" stop-color="#ffb8c1"/></linearGradient>
<linearGradient id="cs53"><stop offset="0.00" stop-color="#a7ebff"/><stop offset="0.25" stop-color="#d5eeff"/><stop offset="0.50" stop-color="#faf0fd"/><stop offset="0.75" stop-color="#ffd9e6"/><stop offset="1.00" stop-color="#ffb7c2"/></linearGradient>
<linearGradient id="cs54"><stop offset="0.00" stop-color="#a7e9ff"/><stop offset="0.25" stop-color="#d5edff"/><stop offset="0.50" stop-color="#fbeffd"/><stop offset="0.75" stop-color="#ffd7e6"/><stop offset="1.00" stop-color="#ffb5c2"/></linearGradient>
<linearGradient id="cs55"><stop offset="0.00" stop-color="#a7e8ff"/><stop offset="0.25" stop-color="#d6ecff"/><stop offset="0.50" stop-color="#fbeefe"/><stop offset="0.75" stop-color="#ffd6e6"/><stop offset="1.00" stop-color="#ffb4c3"/></linearGradient>
<linearGradient id="cs56"><stop offset="0.00" stop-color="#a7e7ff"/><stop offset="0.25" stop-color="#d6ebff"/><stop offset="0.50" stop-color="#fbedfe"/><stop offset="0.75" stop-color="#ffd4e6"/><stop offset="1.00" stop-color="#ffb3c3"/></linearGradient>
<linearGradient id="cs57"><stop offset="0.00" stop-color="#a8e6ff"/><stop offset="0.25" stop-color="#d7eaff"/><stop offset="0.50" stop-color="#fcecfe"/><stop offset="0.75" stop-color="#ffd2e6"/><stop offset="1.00" stop-color="#ffb2c3"/></linearGradient>
<linearGradient id="cs58"><stop offset="0.00" stop-color="#a8e5ff"/><stop offset="0.25" stop-color="#d8e9ff"/><stop offset="0.50" stop-color="#fcebff"/><stop offset="0.75" stop-color="#ffd1e6"/><stop offset="1.00" stop-color="#ffb1c4"/></linearGradient>
<linearGradient id="cs59"><stop offset="0.00" stop-color="#a8e3ff"/><stop offset="0.25" stop-color="#d8e7ff"/><stop offset="0.50" stop-color="#fce9ff"/><stop offset="0.75" stop-color="#ffcfe6"/><stop offset="1.00" stop-color="#ffafc4"/></linearGradient>
<linearGradient id="cs60"><stop offset="0.00" stop-color="#a8e2ff"/><stop offset="0.25" stop-color="#d8e6ff"/><stop offset="0.50" stop-color="#fce7ff"/><stop offset="0.75" stop-color="#ffcee5"/><stop offset="1.00" stop-color="#ffaec4"/></linearGradient>
<linearGradient id="cs61"><stop offset="0.00" stop-color="#a8e0ff"/><stop offset="0.25" stop-color="#d7e4ff"/><stop offset="0.50" stop-color="#fce6ff"/><stop offset="0.75" stop-color="#ffcce5"/><stop offset="1.00" stop-color="#ffadc3"/></linearGradient>
<linearGradient id="cs62"><stop offset="0.00" stop-color="#a8dfff"/><stop offset="0.25" stop-color="#d7e2ff"/><stop offset="0.50" stop-color="#fce4ff"/><stop offset="0.75" stop-color="#ffcae4"/><stop offset="1.00" stop-color="#ffacc3"/></linearGradient>
<linearGradient id="cs63"><stop offset="0.00" stop-color="#a8deff"/><stop offset="0.25" stop-color="#d7e1ff"/><stop offset="0.50" stop-color="#fce2ff"/><stop offset="0.75" stop-color="#ffc9e4"/><stop offset="1.00" stop-color="#ffabc3"/></linearGradient>
<linearGradient id="cs64"><stop offset="0.00" stop-color="#a9dcff"/><stop offset="0.25" stop-color="#d7dfff"/><stop offset="0.50" stop-color="#fce0ff"/><stop offset="0.75" stop-color="#ffc7e3"/><stop offset="1.00" stop-color="#ffa9c3"/></linearGradient>
<linearGradient id="cs65"><stop offset="0.00" stop-color="#a9dbff"/><stop offset="0.25" stop-color="#d7ddff"/><stop offset="0.50" stop-color="#fcdfff"/><stop offset="0.75" stop-color="#ffc5e3"/><stop offset="1.00" stop-color="#ffa8c3"/></linearGradient>
<linearGradient id="cs66"><stop offset="0.00" stop-color="#a9d9ff"/><stop offset="0.25" stop-color="#d6dcff"/><stop offset="0.50" stop-color="#fcddff"/><stop offset="0.75" stop-color="#ffc4e2"/><stop offset="1.00" stop-color="#ffa7c2"/></linearGradient>
<linearGradient id="cs67"><stop offset="0.00" stop-color="#a9d8ff"/><stop offset="0.25" stop-color="#d6daff"/><stop offset="0.50" stop-color="#fcdbff"/><stop offset="0.75" stop-color="#ffc2e2"/><stop offset="1.00" stop-color="#ffa6c2"/></linearGradient>
<linearGradient id="cs68"><stop offset="0.00" stop-color="#a9d6ff"/><stop offset="0.25" stop-color="#d6d9ff"/><stop offset="0.50" stop-color="#fcdaff"/><stop offset="0.75" stop-color="#ffc1e1"/><stop offset="1.00" stop-color="#ffa4c2"/></linearGradient>
<linearGradient id="cs69"><stop offset="0.00" stop-color="#a9d5ff"/><stop offset="0.25" stop-color="#d6d7ff"/><stop offset="0.50" stop-color="#fcd8ff"/><stop offset="0.75" stop-color="#ffbfe1"/><stop offset="1.00" stop-color="#ffa3c2"/></linearGradient>
<linearGradient id="cs70"><stop offset="0.00" stop-color="#a9d4ff"/><stop offset="0.25" stop-color="#d6d5ff"/><stop offset="0.50" stop-color="#fcd6ff"/><stop offset="0.75" stop-color="#ffbde0"/><stop offset="1.00" stop-color="#ffa2c2"/></linearGradient>
<linearGradient id="cs71"><stop offset="0.00" stop-color="#a9d2ff"/><stop offset="0.25" stop-color="#d5d4ff"/><stop offset="0.50" stop-color="#fcd4ff"/><stop offset="0.75" stop-color="#ffbce0"/><stop offset="1.00" stop-color="#ffa1c1"/></linearGradient>
<linearGradient id="cs72"><stop offset="0.00" stop-color="#a9d1ff"/><stop offset="0.25" stop-color="#d5d2ff"/><stop offset="0.50" stop-color="#fcd3ff"/><stop offset="0.75" stop-color="#ffbadf"/><stop offset="1.00" stop-color="#ffa0c1"/></linearGradient>
<linearGradient id="cs73"><stop offset="0.00" stop-color="#a9cfff"/><stop offset="0.25" stop-color="#d5d0ff"/><stop offset="0.50" stop-color="#fcd1ff"/><stop offset="0.75" stop-color="#ffb8df"/><stop offset="1.00" stop-color="#ff9ec1"/></linearGradient>
<linearGradient id="cs74"><stop offset="0.00" stop-color="#aaceff"/><stop offset="0.25" stop-color="#d5cfff"/><stop offset="0.50" stop-color="#fccfff"/><stop offset="0.75" stop-color="#ffb7de"/><stop offset="1.00" stop-color="#ff9dc1"/></linearGradient>
<linearGradient id="cs75"><stop offset="0.00" stop-color="#aacdff"/><stop offset="0.25" stop-color="#d5cdff"/><stop offset="0.50" stop-color="#fccdff"/><stop offset="0.75" stop-color="#ffb5de"/><stop offset="1.00" stop-color="#ff9cc1"/></linearGradient>
<linearGradient id="cs76"><stop offset="0.00" stop-color="#aacbff"/><stop offset="0.25" stop-color="#d4ccff"/><stop offset="0.50" stop-color="#fcccff"/><stop offset="0.75" stop-color="#ffb4dd"/><stop offset="1.00" stop-color="#ff9bc0"/></linearGradient>
<linearGradient id="cs77"><stop offset="0.00" stop-color="#aacaff"/><stop offset="0.25" stop-color="#d4caff"/><stop offset="0.50" stop-color="#fccaff"/><stop offset="0.75" stop-color="#ffb2dd"/><stop offset="1.00" stop-color="#ff99c0"/></linearGradient>
<linearGradient id="cs78"><stop offset="0.00" stop-color="#aac8ff"/><stop offset="0.25" stop-color="#d4c8ff"/><stop offset="0.50" stop-color="#fcc8ff"/><stop offset="0.75" stop-color="#ffb0dc"/><stop offset="1.00" stop-color="#ff98c0"/></linearGradient>
</defs>
<rect x="512" y="989" width="327" height="3.5" fill="url(#cs0)"/>
<rect x="512" y="992" width="327" height="3.5" fill="url(#cs1)"/>
<rect x="512" y="995" width="327" height="3.5" fill="url(#cs2)"/>
<rect x="512" y="998" width="327" height="3.5" fill="url(#cs3)"/>
<rect x="512" y="1001" width="327" height="3.5" fill="url(#cs4)"/>
<rect x="512" y="1004" width="327" height="3.5" fill="url(#cs5)"/>
<rect x="512" y="1007" width="327" height="3.5" fill="url(#cs6)"/>
<rect x="512" y="1010" width="327" height="3.5" fill="url(#cs7)"/>
<rect x="512" y="1013" width="327" height="3.5" fill="url(#cs8)"/>
<rect x="512" y="1016" width="327" height="3.5" fill="url(#cs9)"/>
<rect x="512" y="1019" width="327" height="3.5" fill="url(#cs10)"/>
<rect x="512" y="1022" width="327" height="3.5" fill="url(#cs11)"/>
<rect x="512" y="1025" width="327" height="3.5" fill="url(#cs12)"/>
<rect x="512" y="1028" width="327" height="3.5" fill="url(#cs13)"/>
<rect x="512" y="1031" width="327" height="3.5" fill="url(#cs14)"/>
<rect x="512" y="1034" width="327" height="3.5" fill="url(#cs15)"/>
<rect x="512" y="1037" width="327" height="3.5" fill="url(#cs16)"/>
<rect x="512" y="1040" width="327" height="3.5" fill="url(#cs17)"/>
<rect x="512" y="1043" width="327" height="3.5" fill="url(#cs18)"/>
<rect x="512" y="1046" width="327" height="3.5" fill="url(#cs19)"/>
<rect x="512" y="1049" width="327" height="3.5" fill="url(#cs20)"/>
<rect x="512" y="1052" width="327" height="3.5" fill="url(#cs21)"/>
<rect x="512" y="1055" width="327" height="3.5" fill="url(#cs22)"/>
<rect x="512" y="1058" width="327" height="3.5" fill="url(#cs23)"/>
<rect x="512" y="1061" width="327" height="3.5" fill="url(#cs24)"/>
<rect x="512" y="1064" width="327" height="3.5" fill="url(#cs25)"/>
<rect x="512" y="1067" width="327" height="3.5" fill="url(#cs26)"/>
<rect x="512" y="1070" width="327" height="3.5" fill="url(#cs27)"/>
<rect x="512" y="1073" width="327" height="3.5" fill="url(#cs28)"/>
<rect x="512" y="1076" width="327" height="3.5" fill="url(#cs29)"/>
<rect x="512" y="1079" width="327" height="3.5" fill="url(#cs30)"/>
<rect x="512" y="1082" width="327" height="3.5" fill="url(#cs31)"/>
<rect x="512" y="1085" width="327" height="3.5" fill="url(#cs32)"/>
<rect x="512" y="1088" width="327" height="3.5" fill="url(#cs33)"/>
<rect x="512" y="1091" width="327" height="3.5" fill="url(#cs34)"/>
<rect x="512" y="1094" width="327" height="3.5" fill="url(#cs35)"/>
<rect x="512" y="1097" width="327" height="3.5" fill="url(#cs36)"/>
<rect x="512" y="1100" width="327" height="3.5" fill="url(#cs37)"/>
<rect x="512" y="1103" width="327" height="3.5" fill="url(#cs38)"/>
<rect x="512" y="1106" width="327" height="3.5" fill="url(#cs39)"/>
<rect x="512" y="1109" width="327" height="3.5" fill="url(#cs40)"/>
<rect x="512" y="1112" width="327" height="3.5" fill="url(#cs41)"/>
<rect x="512" y="1115" width="327" height="3.5" fill="url(#cs42)"/>
<rect x="512" y="1118" width="327" height="3.5" fill="url(#cs43)"/>
<rect x="512" y="1121" width="327" height="3.5" fill="url(#cs44)"/>
<rect x="512" y="1124" width="327" height="3.5" fill="url(#cs45)"/>
<rect x="512" y="1127" width="327" height="3.5" fill="url(#cs46)"/>
<rect x="512" y="1130" width="327" height="3.5" fill="url(#cs47)"/>
<rect x="512" y="1133" width="327" height="3.5" fill="url(#cs48)"/>
<rect x="512" y="1136" width="327" height="3.5" fill="url(#cs49)"/>
<rect x="512" y="1139" width="327" height="3.5" fill="url(#cs50)"/>
<rect x="512" y="1142" width="327" height="3.5" fill="url(#cs51)"/>
<rect x="512" y="1145" width="327" height="3.5" fill="url(#cs52)"/>
<rect x="512" y="1148" width="327" height="3.5" fill="url(#cs53)"/>
<rect x="512" y="1151" width="327" height="3.5" fill="url(#cs54)"/>
<rect x="512" y="1154" width="327" height="3.5" fill="url(#cs55)"/>
<rect x="512" y="1157" width="327" height="3.5" fill="url(#cs56)"/>
<rect x="512" y="1160" width="327" height="3.5" fill="url(#cs57)"/>
<rect x="512" y="1163" width="327" height="3.5" fill="url(#cs58)"/>
<rect x="512" y="1166" width="327" height="3.5" fill="url(#cs59)"/>
<rect x="512" y="1169" width="327" height="3.5" fill="url(#cs60)"/>
<rect x="512" y="1172" width="327" height="3.5" fill="url(#cs61)"/>
<rect x="512" y="1175" width="327" height="3.5" fill="url(#cs62)"/>
<rect x="512" y="1178" width="327" height="3.5" fill="url(#cs63)"/>
<rect x="512" y="1181" width="327" height="3.5" fill="url(#cs64)"/>
<rect x="512" y="1184" width="327" height="3.5" fill="url(#cs65)"/>
<rect x="512" y="1187" width="327" height="3.5" fill="url(#cs66)"/>
<rect x="512" y="1190" width="327" height="3.5" fill="url(#cs67)"/>
<rect x="512" y="1193" width="327" height="3.5" fill="url(#cs68)"/>
<rect x="512" y="1196" width="327" height="3.5" fill="url(#cs69)"/>
<rect x="512" y="1199" width="327" height="3.5" fill="url(#cs70)"/>
<rect x="512" y="1202" width="327" height="3.5" fill="url(#cs71)"/>
<rect x="512" y="1205" width="327" height="3.5" fill="url(#cs72)"/>
<rect x="512" y="1208" width="327" height="3.5" fill="url(#cs73)"/>
<rect x="512" y="1211" width="327" height="3.5" fill="url(#cs74)"/>
<rect x="512" y="1214" width="327" height="3.5" fill="url(#cs75)"/>
<rect x="512" y="1217" width="327" height="3.5" fill="url(#cs76)"/>
<rect x="512" y="1220" width="327" height="3.5" fill="url(#cs77)"/>
<rect x="512" y="1223" width="327" height="2.0" fill="url(#cs78)"/>
<rect x="512" y="989" width="327" height="236" fill="none" stroke="#8c8c8c" stroke-width="2"/>
<svg x="513" y="990" width="325" height="234" viewBox="513 990 325 234" overflow="hidden">
<path d="M549 1227.5 Q 690 1123 842 1025.5" fill="none" stroke="#000" stroke-width="4"/>
<circle cx="662.8" cy="1048.3" r="6.3" fill="#151515" stroke="#000" stroke-width="1.5"/>
<rect x="665" y="1096.5" width="18" height="20" fill="#fff" stroke="#000" stroke-width="2"/>
<circle cx="680.4" cy="1087.1" r="5.7" fill="#3a3a3a" stroke="#000" stroke-width="1.5"/>
<circle cx="670.5" cy="1088.2" r="5.7" fill="#555" stroke="#000" stroke-width="1.5"/>
<circle cx="672.5" cy="1091" r="5.7" fill="#777" stroke="#000" stroke-width="1.5"/>
<circle cx="668.6" cy="1100" r="5.7" fill="#ccc" stroke="#000" stroke-width="1.5"/>
<circle cx="658.8" cy="1110.1" r="5.7" fill="#aaa" stroke="#000" stroke-width="1.5"/>
<circle cx="661" cy="1110.3" r="5.7" fill="#ddd" stroke="#000" stroke-width="1.5"/>
<circle cx="664.4" cy="1110.6" r="5.7" fill="#fff" stroke="#000" stroke-width="1.5"/>
</svg>
<line x1="504" y1="1006.7" x2="511" y2="1006.7" stroke="#d8d8d8" stroke-width="2"/>
<line x1="504" y1="1055" x2="511" y2="1055" stroke="#d8d8d8" stroke-width="2"/>
<line x1="504" y1="1102.6" x2="511" y2="1102.6" stroke="#d8d8d8" stroke-width="2"/>
<line x1="504" y1="1148.5" x2="511" y2="1148.5" stroke="#d8d8d8" stroke-width="2"/>
<line x1="504" y1="1195.7" x2="511" y2="1195.7" stroke="#d8d8d8" stroke-width="2"/>
<line x1="525" y1="1226" x2="525" y2="1233" stroke="#d8d8d8" stroke-width="2"/>
<line x1="590" y1="1226" x2="590" y2="1233" stroke="#d8d8d8" stroke-width="2"/>
<line x1="655.5" y1="1226" x2="655.5" y2="1233" stroke="#d8d8d8" stroke-width="2"/>
<line x1="721" y1="1226" x2="721" y2="1233" stroke="#d8d8d8" stroke-width="2"/>
<line x1="786" y1="1226" x2="786" y2="1233" stroke="#d8d8d8" stroke-width="2"/>
</svg>
<div class="abs" style="left:862px;top:956px;width:1320px;height:288px;background:#000"></div>
<div class="abs" style="left:864px;top:958px;width:1316px;height:38px;background:linear-gradient(#333 0%,#2e2e2e 50%,#151515 51%,#111 100%)"></div>
<div class="abs" style="left:864px;top:996.3px;width:1316px;height:35.8px;background:#3f3f3f"></div>
<div class="abs" style="left:864px;top:1031.7px;width:1316px;height:35.8px;background:#808080"></div>
<div class="abs" style="left:864px;top:1067.1px;width:1316px;height:35.8px;background:#3f3f3f"></div>
<div class="abs" style="left:864px;top:1102.5px;width:1316px;height:35.8px;background:#808080"></div>
<div class="abs" style="left:864px;top:1137.9px;width:1316px;height:35.8px;background:#3f3f3f"></div>
<div class="abs" style="left:864px;top:1173.3px;width:1316px;height:35.8px;background:#808080"></div>
<div class="abs" style="left:864px;top:1208.7px;width:1316px;height:35.8px;background:#3f3f3f"></div>
<div class="abs" style="left:2px;top:1329px;width:150px;height:61px;border-radius:5px;background:linear-gradient(#a4a4a4,#8a8a8a 40%,#5e5e5e)"></div>
<div class="abs" style="left:7px;top:1334px;width:140px;height:36px;border-radius:4px;background:#000"></div>
<div class="abs" style="left:154px;top:1329px;width:150px;height:61px;border-radius:5px;background:linear-gradient(#a4a4a4,#8a8a8a 40%,#5e5e5e)"></div>
<div class="abs" style="left:159px;top:1334px;width:140px;height:36px;border-radius:4px;background:#1a1a1a"></div>
<div class="abs" style="left:306px;top:1329px;width:150px;height:61px;border-radius:5px;background:linear-gradient(#a4a4a4,#8a8a8a 40%,#5e5e5e)"></div>
<div class="abs" style="left:311px;top:1334px;width:140px;height:36px;border-radius:4px;background:#333"></div>
<div class="abs" style="left:458px;top:1329px;width:150px;height:61px;border-radius:5px;background:linear-gradient(#a4a4a4,#8a8a8a 40%,#5e5e5e)"></div>
<div class="abs" style="left:463px;top:1334px;width:140px;height:36px;border-radius:4px;background:#4d4d4d"></div>
<div class="abs" style="left:610px;top:1329px;width:150px;height:61px;border-radius:5px;background:linear-gradient(#a4a4a4,#8a8a8a 40%,#5e5e5e)"></div>
<div class="abs" style="left:615px;top:1334px;width:140px;height:36px;border-radius:4px;background:#666"></div>
<div class="abs" style="left:762px;top:1329px;width:150px;height:61px;border-radius:5px;background:linear-gradient(#a4a4a4,#8a8a8a 40%,#5e5e5e)"></div>
<div class="abs" style="left:767px;top:1334px;width:140px;height:36px;border-radius:4px;background:#808080"></div>
<div class="abs" style="left:914px;top:1329px;width:150px;height:61px;border-radius:5px;background:linear-gradient(#a4a4a4,#8a8a8a 40%,#5e5e5e)"></div>
<div class="abs" style="left:919px;top:1334px;width:140px;height:36px;border-radius:4px;background:#999"></div>
<div class="abs" style="left:1066px;top:1329px;width:150px;height:61px;border-radius:5px;background:linear-gradient(#a4a4a4,#8a8a8a 40%,#5e5e5e)"></div>
<div class="abs" style="left:1071px;top:1334px;width:140px;height:36px;border-radius:4px;background:#b3b3b3"></div>
<div class="abs" style="left:1218px;top:1329px;width:150px;height:61px;border-radius:5px;background:linear-gradient(#a4a4a4,#8a8a8a 40%,#5e5e5e)"></div>
<div class="abs" style="left:1223px;top:1334px;width:140px;height:36px;border-radius:4px;background:#ccc"></div>
<div class="abs" style="left:1370px;top:1329px;width:150px;height:61px;border-radius:5px;background:linear-gradient(#a4a4a4,#8a8a8a 40%,#5e5e5e)"></div>
<div class="abs" style="left:1375px;top:1334px;width:140px;height:36px;border-radius:4px;background:#e6e6e6"></div>
<div class="abs" style="left:1672px;top:1329px;width:296px;height:61px;background:linear-gradient(#484848,#2a2a2a)"></div>
<div class="abs" style="left:1522px;top:1329px;width:150px;height:61px;border-radius:5px;background:linear-gradient(#1c1c1c 0,#1c1c1c 44px,#2c2c2c 44px,#2e2e2e)"></div>
<div class="abs" style="left:1527px;top:1334px;width:140px;height:36px;border-radius:4px;background:#fff"></div>
<div class="abs" style="left:1968px;top:1329px;width:322px;height:61px;background:#2a2a2a"></div>
<div class="abs" style="left:1969px;top:1329px;width:48px;height:18px;border-radius:5px 5px 0 0;background:linear-gradient(#a6a6a6,#8a8a8a)"></div>
<div class="abs" style="left:1969px;top:1348px;width:48px;height:42px;border-radius:0 0 5px 5px;background:linear-gradient(#a0a0a0,#7a7a7a)"></div>
<div class="abs" style="left:1977px;top:1353px;width:31px;height:31px;border:2.5px solid #222;border-radius:4px;background:linear-gradient(#c0c0c0 50%,#9a9a9a 50%)"></div>
<div class="abs" style="left:1986px;top:1362px;width:13px;height:13px;background:#111"></div>
<svg class="abs" style="left:1985px;top:1332px" width="16" height="12"><circle cx="8" cy="6" r="6" fill="#8a8a8a"/><path d="M4 8 L8 3.5 L12 8Z" fill="#333"/></svg>
<div class="abs" style="left:2018.0px;top:1329px;width:45px;height:30px;border-radius:5px 0 0 0;background:linear-gradient(#b0b0b0,#7c7c7c);border-right:1px solid #444"></div>
<div class="abs" style="left:2030.5px;top:1334px;width:20px;height:20px;border-radius:50%;background:linear-gradient(#7c7c7c,#8e8e8e 55%,#a8a8a8)"></div>
<div class="abs" style="left:2063.2px;top:1329px;width:45px;height:30px;background:linear-gradient(#b0b0b0,#7c7c7c);border-right:1px solid #444"></div>
<div class="abs" style="left:2075.7px;top:1334px;width:20px;height:20px;border-radius:50%;background:linear-gradient(#7c7c7c,#8e8e8e 55%,#a8a8a8)"></div>
<div class="abs" style="left:2108.4px;top:1329px;width:45px;height:30px;background:linear-gradient(#b0b0b0,#7c7c7c);border-right:1px solid #444"></div>
<div class="abs" style="left:2120.9px;top:1334px;width:20px;height:20px;border-radius:50%;background:linear-gradient(#7c7c7c,#8e8e8e 55%,#a8a8a8)"></div>
<div class="abs" style="left:2153.6px;top:1329px;width:45px;height:30px;background:linear-gradient(#b0b0b0,#7c7c7c);border-right:1px solid #444"></div>
<div class="abs" style="left:2166.1px;top:1334px;width:20px;height:20px;border-radius:50%;background:linear-gradient(#7c7c7c,#8e8e8e 55%,#a8a8a8)"></div>
<div class="abs" style="left:2198.8px;top:1329px;width:45px;height:30px;background:linear-gradient(#b0b0b0,#7c7c7c);border-right:1px solid #444"></div>
<div class="abs" style="left:2211.3px;top:1334px;width:20px;height:20px;border-radius:50%;background:linear-gradient(#7c7c7c,#8e8e8e 55%,#a8a8a8)"></div>
<div class="abs" style="left:2037px;top:1339px;width:8px;height:8px;background:#333"></div>
<svg class="abs" style="left:2082px;top:1337px" width="10" height="12"><path d="M1 0.5 L9 6 L1 11.5Z" fill="#333"/></svg>
<svg class="abs" style="left:2122px;top:1337px" width="16" height="12" viewBox="0 0 16 12"><path d="M4 1 H1.5 V11 H4 M12 1 H14.5 V11 H12" fill="none" stroke="#333" stroke-width="1.8"/><circle cx="6.5" cy="6" r="1" fill="#333"/><circle cx="9.5" cy="6" r="1" fill="#333"/></svg>
<svg class="abs" style="left:2168px;top:1338px" width="18" height="10" viewBox="0 0 18 10"><path d="M9 5 C6 1,2 1,2 5 C2 9,6 9,9 5 C12 1,16 1,16 5 C16 9,12 9,9 5Z" fill="none" stroke="#333" stroke-width="2"/></svg>
<svg class="abs" style="left:2213px;top:1336px" width="16" height="16" viewBox="0 0 16 16"><path d="M3 7 A5 5 0 0 1 12.5 5" fill="none" stroke="#333" stroke-width="2.2"/><path d="M13 9 A5 5 0 0 1 3.5 11" fill="none" stroke="#333" stroke-width="2.2"/><path d="M10 2.5 L14.5 2.5 L13.5 7Z" fill="#333"/><path d="M6 13.5 L1.5 13.5 L2.5 9Z" fill="#333"/></svg>
<div class="abs" style="left:2256px;top:1334px;width:22px;height:22px;border-radius:50%;background:#242424"></div>
<div class="abs" style="left:2018px;top:1360px;width:272px;height:30px;border-radius:5px 5px 0 0;background:linear-gradient(#b0b0b0,#7a7a7a)"></div>
<div class="abs" style="left:2154px;top:1360px;width:1px;height:30px;background:#555"></div>
<div class="abs" style="left:2039px;top:1365px;width:20px;height:20px;border-radius:50%;background:linear-gradient(#7c7c7c,#8e8e8e 55%,#a8a8a8)"></div>
<div class="abs" style="left:2252px;top:1365px;width:20px;height:20px;border-radius:50%;background:linear-gradient(#7c7c7c,#8e8e8e 55%,#a8a8a8)"></div>
<svg class="abs" style="left:2043px;top:1370px" width="12" height="10" viewBox="0 0 12 10"><path d="M6 1 L2 5 L6 9 M10 1 L6 5 L10 9" fill="none" stroke="#333" stroke-width="1.6"/></svg>
<svg class="abs" style="left:2256px;top:1370px" width="12" height="10" viewBox="0 0 12 10"><path d="M2 1 L6 5 L2 9 M6 1 L10 5 L6 9" fill="none" stroke="#333" stroke-width="1.6"/></svg>
<div class="abs" style="left:0;top:1390px;width:2293px;height:1px;background:#222"></div>
<div class="abs" style="left:0;top:1391px;width:2293px;height:1px;background:#8a8a8a"></div>
<svg class="abs" style="left:0;top:0" width="2293" height="1392" viewBox="0 0 2293 1392" font-family='"Liberation Sans", sans-serif'>
<text transform="translate(30.41,20.10) scale(0.8689,1)" font-size="13.57" font-weight="normal" fill="#1a1a1a" stroke="#1a1a1a" stroke-width="0.16" xml:space="preserve">Calman 2025 Calman Ultimate for Business 62 Days Remaining  - Untitled</text>
<text transform="translate(35.64,86.20) scale(1.0472,1)" font-size="11.45" font-weight="normal" fill="#d8d8d8" stroke="#d8d8d8" stroke-width="0.14" >History 1</text>
<text transform="translate(1808.43,78.20) scale(0.8961,1)" font-size="11.88" font-weight="normal" fill="#e6e6e6" stroke="#e6e6e6" stroke-width="0.14" >X-Rite i1Pro 3</text>
<text transform="translate(1807.80,92.30) scale(0.9403,1)" font-size="12.03" font-weight="normal" fill="#e6e6e6" stroke="#e6e6e6" stroke-width="0.14" >Direct View</text>
<text transform="translate(1919.52,84.40) scale(1.0556,1)" font-size="9.14" font-weight="normal" fill="#fff" stroke="#fff" stroke-width="0.11" >638</text>
<text transform="translate(1957.00,78.20) scale(0.9417,1)" font-size="11.88" font-weight="normal" fill="#e6e6e6" stroke="#e6e6e6" stroke-width="0.14" >Mobile Forge</text>
<text transform="translate(2092.52,78.20) scale(0.9302,1)" font-size="11.88" font-weight="normal" fill="#e6e6e6" stroke="#e6e6e6" stroke-width="0.14" >Direct Display Control</text>
<text transform="translate(33.83,232.80) scale(0.9055,1)" font-size="56.86" font-weight="normal" fill="#ececec" stroke="#ececec" stroke-width="0.60" >Grayscale</text>
<text transform="translate(203.71,301.10) scale(0.9891,1)" font-size="20.14" font-weight="normal" fill="#dedede" stroke="#dedede" stroke-width="0.24" >DeltaE 2000</text>
<text transform="translate(51.40,642.41) scale(1.0000,1)" font-size="19.43" font-weight="normal" fill="#dedede" stroke="#dedede" stroke-width="0.23" >0</text>
<text transform="translate(40.61,611.23) scale(1.0000,1)" font-size="19.43" font-weight="normal" fill="#dedede" stroke="#dedede" stroke-width="0.23" >10</text>
<text transform="translate(40.61,580.05) scale(1.0000,1)" font-size="19.43" font-weight="normal" fill="#dedede" stroke="#dedede" stroke-width="0.23" >20</text>
<text transform="translate(40.61,548.86) scale(1.0000,1)" font-size="19.43" font-weight="normal" fill="#dedede" stroke="#dedede" stroke-width="0.23" >30</text>
<text transform="translate(40.61,517.68) scale(1.0000,1)" font-size="19.43" font-weight="normal" fill="#dedede" stroke="#dedede" stroke-width="0.23" >40</text>
<text transform="translate(40.61,486.50) scale(1.0000,1)" font-size="19.43" font-weight="normal" fill="#dedede" stroke="#dedede" stroke-width="0.23" >50</text>
<text transform="translate(40.61,455.32) scale(1.0000,1)" font-size="19.43" font-weight="normal" fill="#dedede" stroke="#dedede" stroke-width="0.23" >60</text>
<text transform="translate(40.61,424.14) scale(1.0000,1)" font-size="19.43" font-weight="normal" fill="#dedede" stroke="#dedede" stroke-width="0.23" >70</text>
<text transform="translate(40.61,392.95) scale(1.0000,1)" font-size="19.43" font-weight="normal" fill="#dedede" stroke="#dedede" stroke-width="0.23" >80</text>
<text transform="translate(40.61,361.77) scale(1.0000,1)" font-size="19.43" font-weight="normal" fill="#dedede" stroke="#dedede" stroke-width="0.23" >90</text>
<text transform="translate(29.83,330.59) scale(1.0000,1)" font-size="19.43" font-weight="normal" fill="#dedede" stroke="#dedede" stroke-width="0.23" >100</text>
<text transform="translate(57.40,681.00) scale(1.0000,1)" font-size="20.00" font-weight="normal" fill="#dedede" stroke="#dedede" stroke-width="0.24" >0</text>
<text transform="translate(113.85,681.00) scale(1.0000,1)" font-size="20.00" font-weight="normal" fill="#dedede" stroke="#dedede" stroke-width="0.24" >2</text>
<text transform="translate(170.35,681.00) scale(1.0000,1)" font-size="20.00" font-weight="normal" fill="#dedede" stroke="#dedede" stroke-width="0.24" >4</text>
<text transform="translate(226.55,681.00) scale(1.0000,1)" font-size="20.00" font-weight="normal" fill="#dedede" stroke="#dedede" stroke-width="0.24" >6</text>
<text transform="translate(283.00,681.00) scale(1.0000,1)" font-size="20.00" font-weight="normal" fill="#dedede" stroke="#dedede" stroke-width="0.24" >8</text>
<text transform="translate(333.50,681.00) scale(1.0000,1)" font-size="20.00" font-weight="normal" fill="#dedede" stroke="#dedede" stroke-width="0.24" >10</text>
<text transform="translate(390.05,681.00) scale(1.0000,1)" font-size="20.00" font-weight="normal" fill="#dedede" stroke="#dedede" stroke-width="0.24" >12</text>
<text transform="translate(446.25,681.00) scale(1.0000,1)" font-size="20.00" font-weight="normal" fill="#dedede" stroke="#dedede" stroke-width="0.24" >14</text>
<text transform="translate(897.49,206.80) scale(0.9513,1)" font-size="19.86" font-weight="normal" fill="#dedede" stroke="#dedede" stroke-width="0.24" >RGB Balance</text>
<text transform="translate(554.31,658.02) scale(1.0000,1)" font-size="19.71" font-weight="normal" fill="#dedede" stroke="#dedede" stroke-width="0.24" >80</text>
<text transform="translate(554.41,603.63) scale(1.0000,1)" font-size="19.71" font-weight="normal" fill="#dedede" stroke="#dedede" stroke-width="0.24" >85</text>
<text transform="translate(554.31,549.24) scale(1.0000,1)" font-size="19.71" font-weight="normal" fill="#dedede" stroke="#dedede" stroke-width="0.24" >90</text>
<text transform="translate(554.41,494.85) scale(1.0000,1)" font-size="19.71" font-weight="normal" fill="#dedede" stroke="#dedede" stroke-width="0.24" >95</text>
<text transform="translate(543.37,440.46) scale(1.0000,1)" font-size="19.71" font-weight="normal" fill="#dedede" stroke="#dedede" stroke-width="0.24" >100</text>
<text transform="translate(543.46,386.07) scale(1.0000,1)" font-size="19.71" font-weight="normal" fill="#dedede" stroke="#dedede" stroke-width="0.24" >105</text>
<text transform="translate(544.75,331.68) scale(1.0000,1)" font-size="19.71" font-weight="normal" fill="#dedede" stroke="#dedede" stroke-width="0.24" >110</text>
<text transform="translate(544.84,277.29) scale(1.0000,1)" font-size="19.71" font-weight="normal" fill="#dedede" stroke="#dedede" stroke-width="0.24" >115</text>
<text transform="translate(543.37,222.90) scale(1.0000,1)" font-size="19.71" font-weight="normal" fill="#dedede" stroke="#dedede" stroke-width="0.24" >120</text>
<text transform="translate(579.40,681.00) scale(1.0000,1)" font-size="20.00" font-weight="normal" fill="#dedede" stroke="#dedede" stroke-width="0.24" >0</text>
<text transform="translate(651.60,681.00) scale(1.0000,1)" font-size="20.00" font-weight="normal" fill="#dedede" stroke="#dedede" stroke-width="0.24" >10</text>
<text transform="translate(729.95,681.00) scale(1.0000,1)" font-size="20.00" font-weight="normal" fill="#dedede" stroke="#dedede" stroke-width="0.24" >20</text>
<text transform="translate(808.15,681.00) scale(1.0000,1)" font-size="20.00" font-weight="normal" fill="#dedede" stroke="#dedede" stroke-width="0.24" >30</text>
<text transform="translate(886.45,681.00) scale(1.0000,1)" font-size="20.00" font-weight="normal" fill="#dedede" stroke="#dedede" stroke-width="0.24" >40</text>
<text transform="translate(964.35,681.00) scale(1.0000,1)" font-size="20.00" font-weight="normal" fill="#dedede" stroke="#dedede" stroke-width="0.24" >50</text>
<text transform="translate(1042.35,681.00) scale(1.0000,1)" font-size="20.00" font-weight="normal" fill="#dedede" stroke="#dedede" stroke-width="0.24" >60</text>
<text transform="translate(1120.45,681.00) scale(1.0000,1)" font-size="20.00" font-weight="normal" fill="#dedede" stroke="#dedede" stroke-width="0.24" >70</text>
<text transform="translate(1198.60,681.00) scale(1.0000,1)" font-size="20.00" font-weight="normal" fill="#dedede" stroke="#dedede" stroke-width="0.24" >80</text>
<text transform="translate(1276.70,681.00) scale(1.0000,1)" font-size="20.00" font-weight="normal" fill="#dedede" stroke="#dedede" stroke-width="0.24" >90</text>
<text transform="translate(1348.95,681.00) scale(1.0000,1)" font-size="20.00" font-weight="normal" fill="#dedede" stroke="#dedede" stroke-width="0.24" >100</text>
<text transform="translate(1757.79,206.70) scale(1.0365,1)" font-size="19.57" font-weight="normal" fill="#dedede" stroke="#dedede" stroke-width="0.23" >Gamma Log/Log</text>
<text transform="translate(1437.45,652.70) scale(1.0000,1)" font-size="19.71" font-weight="normal" fill="#dedede" stroke="#dedede" stroke-width="0.24" >1</text>
<text transform="translate(1421.08,598.32) scale(1.0000,1)" font-size="19.71" font-weight="normal" fill="#dedede" stroke="#dedede" stroke-width="0.24" >1,2</text>
<text transform="translate(1420.69,543.94) scale(1.0000,1)" font-size="19.71" font-weight="normal" fill="#dedede" stroke="#dedede" stroke-width="0.24" >1,4</text>
<text transform="translate(1420.89,489.56) scale(1.0000,1)" font-size="19.71" font-weight="normal" fill="#dedede" stroke="#dedede" stroke-width="0.24" >1,6</text>
<text transform="translate(1420.89,435.18) scale(1.0000,1)" font-size="19.71" font-weight="normal" fill="#dedede" stroke="#dedede" stroke-width="0.24" >1,8</text>
<text transform="translate(1437.54,380.80) scale(1.0000,1)" font-size="19.71" font-weight="normal" fill="#dedede" stroke="#dedede" stroke-width="0.24" >2</text>
<text transform="translate(1421.08,326.42) scale(1.0000,1)" font-size="19.71" font-weight="normal" fill="#dedede" stroke="#dedede" stroke-width="0.24" >2,2</text>
<text transform="translate(1420.69,272.04) scale(1.0000,1)" font-size="19.71" font-weight="normal" fill="#dedede" stroke="#dedede" stroke-width="0.24" >2,4</text>
<text transform="translate(1451.40,681.00) scale(1.0000,1)" font-size="20.00" font-weight="normal" fill="#dedede" stroke="#dedede" stroke-width="0.24" >0</text>
<text transform="translate(1524.27,681.00) scale(1.0000,1)" font-size="20.00" font-weight="normal" fill="#dedede" stroke="#dedede" stroke-width="0.24" >10</text>
<text transform="translate(1603.29,681.00) scale(1.0000,1)" font-size="20.00" font-weight="normal" fill="#dedede" stroke="#dedede" stroke-width="0.24" >20</text>
<text transform="translate(1682.16,681.00) scale(1.0000,1)" font-size="20.00" font-weight="normal" fill="#dedede" stroke="#dedede" stroke-width="0.24" >30</text>
<text transform="translate(1761.13,681.00) scale(1.0000,1)" font-size="20.00" font-weight="normal" fill="#dedede" stroke="#dedede" stroke-width="0.24" >40</text>
<text transform="translate(1839.70,681.00) scale(1.0000,1)" font-size="20.00" font-weight="normal" fill="#dedede" stroke="#dedede" stroke-width="0.24" >50</text>
<text transform="translate(1918.37,681.00) scale(1.0000,1)" font-size="20.00" font-weight="normal" fill="#dedede" stroke="#dedede" stroke-width="0.24" >60</text>
<text transform="translate(1997.14,681.00) scale(1.0000,1)" font-size="20.00" font-weight="normal" fill="#dedede" stroke="#dedede" stroke-width="0.24" >70</text>
<text transform="translate(2075.96,681.00) scale(1.0000,1)" font-size="20.00" font-weight="normal" fill="#dedede" stroke="#dedede" stroke-width="0.24" >80</text>
<text transform="translate(2154.73,681.00) scale(1.0000,1)" font-size="20.00" font-weight="normal" fill="#dedede" stroke="#dedede" stroke-width="0.24" >90</text>
<text transform="translate(2227.65,681.00) scale(1.0000,1)" font-size="20.00" font-weight="normal" fill="#dedede" stroke="#dedede" stroke-width="0.24" >100</text>
<text transform="translate(119.80,737.60) scale(0.9739,1)" font-size="41.45" font-weight="normal" fill="#ececec" stroke="#ececec" stroke-width="0.50" >Avg dE2000: 1,4</text>
<text transform="translate(684.80,737.60) scale(0.9361,1)" font-size="41.45" font-weight="normal" fill="#ececec" stroke="#ececec" stroke-width="0.50" >Avg CCT: 6544</text>
<text transform="translate(1197.52,737.60) scale(1.0031,1)" font-size="41.45" font-weight="normal" fill="#ececec" stroke="#ececec" stroke-width="0.50" >Contrast Ratio: 3149</text>
<text transform="translate(1789.67,737.60) scale(0.9966,1)" font-size="41.45" font-weight="normal" fill="#ececec" stroke="#ececec" stroke-width="0.50" >Total Gamma: 2,24</text>

<g transform="translate(356.30,827.50) rotate(-90)"><text transform="translate(0.00,0.00) scale(0.9704,1)" font-size="17.68" font-weight="normal" fill="#e8e8e8" stroke="#e8e8e8" stroke-width="0.21" >Actual</text></g>
<g transform="translate(356.30,905.00) rotate(-90)"><text transform="translate(-0.33,0.00) scale(0.9461,1)" font-size="17.68" font-weight="normal" fill="#e8e8e8" stroke="#e8e8e8" stroke-width="0.21" >Target</text></g>
<text transform="translate(430.23,932.70) scale(1.0000,1)" font-size="16.14" font-weight="normal" fill="#f0f0f0" stroke="#f0f0f0" stroke-width="0.19" >0</text>
<text transform="translate(583.37,932.70) scale(1.0000,1)" font-size="16.14" font-weight="normal" fill="#f0f0f0" stroke="#f0f0f0" stroke-width="0.19" >10</text>
<text transform="translate(741.47,932.70) scale(1.0000,1)" font-size="16.14" font-weight="normal" fill="#f0f0f0" stroke="#f0f0f0" stroke-width="0.19" >20</text>
<text transform="translate(899.45,932.70) scale(1.0000,1)" font-size="16.14" font-weight="normal" fill="#f0f0f0" stroke="#f0f0f0" stroke-width="0.19" >30</text>
<text transform="translate(1057.51,932.70) scale(1.0000,1)" font-size="16.14" font-weight="normal" fill="#f0f0f0" stroke="#f0f0f0" stroke-width="0.19" >40</text>
<text transform="translate(1215.25,932.70) scale(1.0000,1)" font-size="16.14" font-weight="normal" fill="#f0f0f0" stroke="#f0f0f0" stroke-width="0.19" >50</text>
<text transform="translate(1373.07,932.70) scale(1.0000,1)" font-size="16.14" font-weight="normal" fill="#f0f0f0" stroke="#f0f0f0" stroke-width="0.19" >60</text>
<text transform="translate(1530.97,932.70) scale(1.0000,1)" font-size="16.14" font-weight="normal" fill="#f0f0f0" stroke="#f0f0f0" stroke-width="0.19" >70</text>
<text transform="translate(1688.91,932.70) scale(1.0000,1)" font-size="16.14" font-weight="normal" fill="#f0f0f0" stroke="#f0f0f0" stroke-width="0.19" >80</text>
<text transform="translate(1846.81,932.70) scale(1.0000,1)" font-size="16.14" font-weight="normal" fill="#f0f0f0" stroke="#f0f0f0" stroke-width="0.19" >90</text>
<text transform="translate(1999.99,932.70) scale(1.0000,1)" font-size="16.14" font-weight="normal" fill="#f0f0f0" stroke="#f0f0f0" stroke-width="0.19" >100</text>
<text transform="translate(20.23,1017.80) scale(1.0062,1)" font-size="41.14" font-weight="normal" fill="#ececec" stroke="#ececec" stroke-width="0.49" >Current Reading</text>
<text transform="translate(20.85,1075.80) scale(1.0419,1)" font-size="33.71" font-weight="normal" fill="#ececec" stroke="#ececec" stroke-width="0.40" >x: 0,3112</text>
<text transform="translate(21.43,1132.10) scale(1.0181,1)" font-size="34.00" font-weight="normal" fill="#ececec" stroke="#ececec" stroke-width="0.41" >y: 0,328</text>
<text transform="translate(21.08,1188.90) scale(1.0120,1)" font-size="34.00" font-weight="normal" fill="#ececec" stroke="#ececec" stroke-width="0.41" >fL: 178,64</text>
<text transform="translate(20.16,1245.10) scale(1.0624,1)" font-size="34.00" font-weight="normal" fill="#ececec" stroke="#ececec" stroke-width="0.41" >cd/m²: 612,06</text>
<text transform="translate(464.94,1013.70) scale(1.0000,1)" font-size="19.71" font-weight="normal" fill="#dedede" stroke="#dedede" stroke-width="0.24" >0,35</text>
<text transform="translate(464.75,1062.00) scale(1.0000,1)" font-size="19.71" font-weight="normal" fill="#dedede" stroke="#dedede" stroke-width="0.24" >0,34</text>
<text transform="translate(464.94,1109.60) scale(1.0000,1)" font-size="19.71" font-weight="normal" fill="#dedede" stroke="#dedede" stroke-width="0.24" >0,33</text>
<text transform="translate(465.14,1155.50) scale(1.0000,1)" font-size="19.71" font-weight="normal" fill="#dedede" stroke="#dedede" stroke-width="0.24" >0,32</text>
<text transform="translate(465.04,1202.70) scale(1.0000,1)" font-size="19.71" font-weight="normal" fill="#dedede" stroke="#dedede" stroke-width="0.24" >0,31</text>
<text transform="translate(505.60,1254.50) scale(1.0000,1)" font-size="20.00" font-weight="normal" fill="#dedede" stroke="#dedede" stroke-width="0.24" >0,29</text>
<text transform="translate(576.10,1254.50) scale(1.0000,1)" font-size="20.00" font-weight="normal" fill="#dedede" stroke="#dedede" stroke-width="0.24" >0,3</text>
<text transform="translate(636.10,1254.50) scale(1.0000,1)" font-size="20.00" font-weight="normal" fill="#dedede" stroke="#dedede" stroke-width="0.24" >0,31</text>
<text transform="translate(701.65,1254.50) scale(1.0000,1)" font-size="20.00" font-weight="normal" fill="#dedede" stroke="#dedede" stroke-width="0.24" >0,32</text>
<text transform="translate(766.55,1254.50) scale(1.0000,1)" font-size="20.00" font-weight="normal" fill="#dedede" stroke="#dedede" stroke-width="0.24" >0,33</text>
<text transform="translate(1117.54,984.80) scale(1.0000,1)" font-size="18.43" font-weight="normal" fill="#f6f6f6" stroke="#f6f6f6" stroke-width="0.22" >0</text>
<text transform="translate(1212.80,984.80) scale(1.0000,1)" font-size="18.43" font-weight="normal" fill="#f6f6f6" stroke="#f6f6f6" stroke-width="0.22" >10</text>
<text transform="translate(1313.73,984.80) scale(1.0000,1)" font-size="18.43" font-weight="normal" fill="#f6f6f6" stroke="#f6f6f6" stroke-width="0.22" >20</text>
<text transform="translate(1414.53,984.80) scale(1.0000,1)" font-size="18.43" font-weight="normal" fill="#f6f6f6" stroke="#f6f6f6" stroke-width="0.22" >30</text>
<text transform="translate(1515.41,984.80) scale(1.0000,1)" font-size="18.43" font-weight="normal" fill="#f6f6f6" stroke="#f6f6f6" stroke-width="0.22" >40</text>
<text transform="translate(1615.93,984.80) scale(1.0000,1)" font-size="18.43" font-weight="normal" fill="#f6f6f6" stroke="#f6f6f6" stroke-width="0.22" >50</text>
<text transform="translate(1716.53,984.80) scale(1.0000,1)" font-size="18.43" font-weight="normal" fill="#f6f6f6" stroke="#f6f6f6" stroke-width="0.22" >60</text>
<text transform="translate(1817.23,984.80) scale(1.0000,1)" font-size="18.43" font-weight="normal" fill="#f6f6f6" stroke="#f6f6f6" stroke-width="0.22" >70</text>
<text transform="translate(1917.98,984.80) scale(1.0000,1)" font-size="18.43" font-weight="normal" fill="#f6f6f6" stroke="#f6f6f6" stroke-width="0.22" >80</text>
<text transform="translate(2018.68,984.80) scale(1.0000,1)" font-size="18.43" font-weight="normal" fill="#f6f6f6" stroke="#f6f6f6" stroke-width="0.22" >90</text>
<text transform="translate(2113.99,984.80) scale(1.0000,1)" font-size="18.43" font-weight="normal" fill="#f6f6f6" stroke="#f6f6f6" stroke-width="0.22" >100</text>
<text transform="translate(879.99,1021.90) scale(0.9416,1)" font-size="22.00" font-weight="bold" fill="#f2f2f2" >x: CIE31</text>
<text transform="translate(1078.16,1021.90) scale(1.0000,1)" font-size="21.00" font-weight="normal" fill="#f0f0f0" stroke="#f0f0f0" stroke-width="0.25" >0,309</text>
<text transform="translate(1178.86,1021.90) scale(1.0000,1)" font-size="21.00" font-weight="normal" fill="#f0f0f0" stroke="#f0f0f0" stroke-width="0.25" >0,311</text>
<text transform="translate(1279.56,1021.90) scale(1.0000,1)" font-size="21.00" font-weight="normal" fill="#f0f0f0" stroke="#f0f0f0" stroke-width="0.25" >0,314</text>
<text transform="translate(1380.26,1021.90) scale(1.0000,1)" font-size="21.00" font-weight="normal" fill="#f0f0f0" stroke="#f0f0f0" stroke-width="0.25" >0,312</text>
<text transform="translate(1480.96,1021.90) scale(1.0000,1)" font-size="21.00" font-weight="normal" fill="#f0f0f0" stroke="#f0f0f0" stroke-width="0.25" >0,312</text>
<text transform="translate(1581.66,1021.90) scale(1.0000,1)" font-size="21.00" font-weight="normal" fill="#f0f0f0" stroke="#f0f0f0" stroke-width="0.25" >0,312</text>
<text transform="translate(1682.36,1021.90) scale(1.0000,1)" font-size="21.00" font-weight="normal" fill="#f0f0f0" stroke="#f0f0f0" stroke-width="0.25" >0,312</text>
<text transform="translate(1783.06,1021.90) scale(1.0000,1)" font-size="21.00" font-weight="normal" fill="#f0f0f0" stroke="#f0f0f0" stroke-width="0.25" >0,311</text>
<text transform="translate(1883.76,1021.90) scale(1.0000,1)" font-size="21.00" font-weight="normal" fill="#f0f0f0" stroke="#f0f0f0" stroke-width="0.25" >0,312</text>
<text transform="translate(1984.46,1021.90) scale(1.0000,1)" font-size="21.00" font-weight="normal" fill="#f0f0f0" stroke="#f0f0f0" stroke-width="0.25" >0,311</text>
<text transform="translate(2085.16,1021.90) scale(1.0000,1)" font-size="21.00" font-weight="normal" fill="#f0f0f0" stroke="#f0f0f0" stroke-width="0.25" >0,311</text>
<text transform="translate(879.99,1057.35) scale(0.9416,1)" font-size="22.00" font-weight="bold" fill="#f2f2f2" >y: CIE31</text>
<text transform="translate(1078.16,1057.35) scale(1.0000,1)" font-size="21.00" font-weight="normal" fill="#f0f0f0" stroke="#f0f0f0" stroke-width="0.25" >0,283</text>
<text transform="translate(1178.86,1057.35) scale(1.0000,1)" font-size="21.00" font-weight="normal" fill="#f0f0f0" stroke="#f0f0f0" stroke-width="0.25" >0,341</text>
<text transform="translate(1279.56,1057.35) scale(1.0000,1)" font-size="21.00" font-weight="normal" fill="#f0f0f0" stroke="#f0f0f0" stroke-width="0.25" >0,333</text>
<text transform="translate(1380.26,1057.35) scale(1.0000,1)" font-size="21.00" font-weight="normal" fill="#f0f0f0" stroke="#f0f0f0" stroke-width="0.25" >0,328</text>
<text transform="translate(1480.96,1057.35) scale(1.0000,1)" font-size="21.00" font-weight="normal" fill="#f0f0f0" stroke="#f0f0f0" stroke-width="0.25" >0,333</text>
<text transform="translate(1581.66,1057.35) scale(1.0000,1)" font-size="21.00" font-weight="normal" fill="#f0f0f0" stroke="#f0f0f0" stroke-width="0.25" >0,332</text>
<text transform="translate(1682.36,1057.35) scale(1.0000,1)" font-size="21.00" font-weight="normal" fill="#f0f0f0" stroke="#f0f0f0" stroke-width="0.25" >0,329</text>
<text transform="translate(1783.06,1057.35) scale(1.0000,1)" font-size="21.00" font-weight="normal" fill="#f0f0f0" stroke="#f0f0f0" stroke-width="0.25" >0,328</text>
<text transform="translate(1883.76,1057.35) scale(1.0000,1)" font-size="21.00" font-weight="normal" fill="#f0f0f0" stroke="#f0f0f0" stroke-width="0.25" >0,330</text>
<text transform="translate(1984.46,1057.35) scale(1.0000,1)" font-size="21.00" font-weight="normal" fill="#f0f0f0" stroke="#f0f0f0" stroke-width="0.25" >0,328</text>
<text transform="translate(2085.16,1057.35) scale(1.0000,1)" font-size="21.00" font-weight="normal" fill="#f0f0f0" stroke="#f0f0f0" stroke-width="0.25" >0,328</text>
<text transform="translate(879.79,1092.80) scale(0.9380,1)" font-size="22.00" font-weight="bold" fill="#f2f2f2" >Y</text>
<text transform="translate(1078.16,1092.80) scale(1.0000,1)" font-size="21.00" font-weight="normal" fill="#f0f0f0" stroke="#f0f0f0" stroke-width="0.25" >0,194</text>
<text transform="translate(1178.86,1092.80) scale(1.0000,1)" font-size="21.00" font-weight="normal" fill="#f0f0f0" stroke="#f0f0f0" stroke-width="0.25" >3,717</text>
<text transform="translate(1278.83,1092.80) scale(1.0000,1)" font-size="21.00" font-weight="normal" fill="#f0f0f0" stroke="#f0f0f0" stroke-width="0.25" >16,808</text>
<text transform="translate(1380.68,1092.80) scale(1.0000,1)" font-size="21.00" font-weight="normal" fill="#f0f0f0" stroke="#f0f0f0" stroke-width="0.25" >40,436</text>
<text transform="translate(1480.75,1092.80) scale(1.0000,1)" font-size="21.00" font-weight="normal" fill="#f0f0f0" stroke="#f0f0f0" stroke-width="0.25" >79,168</text>
<text transform="translate(1580.92,1092.80) scale(1.0000,1)" font-size="21.00" font-weight="normal" fill="#f0f0f0" stroke="#f0f0f0" stroke-width="0.25" >131,097</text>
<text transform="translate(1681.62,1092.80) scale(1.0000,1)" font-size="21.00" font-weight="normal" fill="#f0f0f0" stroke="#f0f0f0" stroke-width="0.25" >195,550</text>
<text transform="translate(1782.85,1092.80) scale(1.0000,1)" font-size="21.00" font-weight="normal" fill="#f0f0f0" stroke="#f0f0f0" stroke-width="0.25" >273,437</text>
<text transform="translate(1883.76,1092.80) scale(1.0000,1)" font-size="21.00" font-weight="normal" fill="#f0f0f0" stroke="#f0f0f0" stroke-width="0.25" >374,193</text>
<text transform="translate(1984.88,1092.80) scale(1.0000,1)" font-size="21.00" font-weight="normal" fill="#f0f0f0" stroke="#f0f0f0" stroke-width="0.25" >484,978</text>
<text transform="translate(2084.95,1092.80) scale(1.0000,1)" font-size="21.00" font-weight="normal" fill="#f0f0f0" stroke="#f0f0f0" stroke-width="0.25" >612,058</text>
<text transform="translate(879.98,1128.25) scale(1.0040,1)" font-size="22.00" font-weight="bold" fill="#f2f2f2" >Target Y</text>
<text transform="translate(1078.16,1128.25) scale(1.0000,1)" font-size="21.00" font-weight="normal" fill="#f0f0f0" stroke="#f0f0f0" stroke-width="0.25" >0,000</text>
<text transform="translate(1178.65,1128.25) scale(1.0000,1)" font-size="21.00" font-weight="normal" fill="#f0f0f0" stroke="#f0f0f0" stroke-width="0.25" >6,322</text>
<text transform="translate(1279.35,1128.25) scale(1.0000,1)" font-size="21.00" font-weight="normal" fill="#f0f0f0" stroke="#f0f0f0" stroke-width="0.25" >20,262</text>
<text transform="translate(1380.68,1128.25) scale(1.0000,1)" font-size="21.00" font-weight="normal" fill="#f0f0f0" stroke="#f0f0f0" stroke-width="0.25" >44,235</text>
<text transform="translate(1480.86,1128.25) scale(1.0000,1)" font-size="21.00" font-weight="normal" fill="#f0f0f0" stroke="#f0f0f0" stroke-width="0.25" >81,323</text>
<text transform="translate(1580.92,1128.25) scale(1.0000,1)" font-size="21.00" font-weight="normal" fill="#f0f0f0" stroke="#f0f0f0" stroke-width="0.25" >132,119</text>
<text transform="translate(1681.62,1128.25) scale(1.0000,1)" font-size="21.00" font-weight="normal" fill="#f0f0f0" stroke="#f0f0f0" stroke-width="0.25" >194,969</text>
<text transform="translate(1782.85,1128.25) scale(1.0000,1)" font-size="21.00" font-weight="normal" fill="#f0f0f0" stroke="#f0f0f0" stroke-width="0.25" >272,489</text>
<text transform="translate(1883.76,1128.25) scale(1.0000,1)" font-size="21.00" font-weight="normal" fill="#f0f0f0" stroke="#f0f0f0" stroke-width="0.25" >369,577</text>
<text transform="translate(1984.88,1128.25) scale(1.0000,1)" font-size="21.00" font-weight="normal" fill="#f0f0f0" stroke="#f0f0f0" stroke-width="0.25" >484,320</text>
<text transform="translate(2084.95,1128.25) scale(1.0000,1)" font-size="21.00" font-weight="normal" fill="#f0f0f0" stroke="#f0f0f0" stroke-width="0.25" >612,058</text>
<text transform="translate(879.30,1163.70) scale(1.0229,1)" font-size="22.00" font-weight="bold" fill="#f2f2f2" >Gamma Log/Log</text>
<text transform="translate(1077.42,1163.70) scale(1.0000,1)" font-size="21.00" font-weight="normal" fill="#f0f0f0" stroke="#f0f0f0" stroke-width="0.25" >1,278</text>
<text transform="translate(1178.65,1163.70) scale(1.0000,1)" font-size="21.00" font-weight="normal" fill="#f0f0f0" stroke="#f0f0f0" stroke-width="0.25" >2,235</text>
<text transform="translate(1279.35,1163.70) scale(1.0000,1)" font-size="21.00" font-weight="normal" fill="#f0f0f0" stroke="#f0f0f0" stroke-width="0.25" >2,234</text>
<text transform="translate(1380.05,1163.70) scale(1.0000,1)" font-size="21.00" font-weight="normal" fill="#f0f0f0" stroke="#f0f0f0" stroke-width="0.25" >2,245</text>
<text transform="translate(1480.75,1163.70) scale(1.0000,1)" font-size="21.00" font-weight="normal" fill="#f0f0f0" stroke="#f0f0f0" stroke-width="0.25" >2,232</text>
<text transform="translate(1581.45,1163.70) scale(1.0000,1)" font-size="21.00" font-weight="normal" fill="#f0f0f0" stroke="#f0f0f0" stroke-width="0.25" >2,236</text>
<text transform="translate(1682.15,1163.70) scale(1.0000,1)" font-size="21.00" font-weight="normal" fill="#f0f0f0" stroke="#f0f0f0" stroke-width="0.25" >2,234</text>
<text transform="translate(1782.85,1163.70) scale(1.0000,1)" font-size="21.00" font-weight="normal" fill="#f0f0f0" stroke="#f0f0f0" stroke-width="0.25" >2,241</text>
<text transform="translate(1883.55,1163.70) scale(1.0000,1)" font-size="21.00" font-weight="normal" fill="#f0f0f0" stroke="#f0f0f0" stroke-width="0.25" >2,205</text>
<text transform="translate(1984.25,1163.70) scale(1.0000,1)" font-size="21.00" font-weight="normal" fill="#f0f0f0" stroke="#f0f0f0" stroke-width="0.25" >2,255</text>
<text transform="translate(2084.95,1163.70) scale(1.0000,1)" font-size="21.00" font-weight="normal" fill="#f0f0f0" stroke="#f0f0f0" stroke-width="0.25" >2,275</text>
<text transform="translate(879.40,1199.15) scale(0.9046,1)" font-size="22.00" font-weight="bold" fill="#f2f2f2" >CCT</text>
<text transform="translate(1077.95,1199.15) scale(1.0000,1)" font-size="21.00" font-weight="normal" fill="#f0f0f0" stroke="#f0f0f0" stroke-width="0.25" >7325,000</text>
<text transform="translate(1178.65,1199.15) scale(1.0000,1)" font-size="21.00" font-weight="normal" fill="#f0f0f0" stroke="#f0f0f0" stroke-width="0.25" >6512,000</text>
<text transform="translate(1279.35,1199.15) scale(1.0000,1)" font-size="21.00" font-weight="normal" fill="#f0f0f0" stroke="#f0f0f0" stroke-width="0.25" >6422,000</text>
<text transform="translate(1380.05,1199.15) scale(1.0000,1)" font-size="21.00" font-weight="normal" fill="#f0f0f0" stroke="#f0f0f0" stroke-width="0.25" >6569,000</text>
<text transform="translate(1480.75,1199.15) scale(1.0000,1)" font-size="21.00" font-weight="normal" fill="#f0f0f0" stroke="#f0f0f0" stroke-width="0.25" >6507,000</text>
<text transform="translate(1581.45,1199.15) scale(1.0000,1)" font-size="21.00" font-weight="normal" fill="#f0f0f0" stroke="#f0f0f0" stroke-width="0.25" >6500,000</text>
<text transform="translate(1682.15,1199.15) scale(1.0000,1)" font-size="21.00" font-weight="normal" fill="#f0f0f0" stroke="#f0f0f0" stroke-width="0.25" >6561,000</text>
<text transform="translate(1782.85,1199.15) scale(1.0000,1)" font-size="21.00" font-weight="normal" fill="#f0f0f0" stroke="#f0f0f0" stroke-width="0.25" >6628,000</text>
<text transform="translate(1883.55,1199.15) scale(1.0000,1)" font-size="21.00" font-weight="normal" fill="#f0f0f0" stroke="#f0f0f0" stroke-width="0.25" >6546,000</text>
<text transform="translate(1984.25,1199.15) scale(1.0000,1)" font-size="21.00" font-weight="normal" fill="#f0f0f0" stroke="#f0f0f0" stroke-width="0.25" >6600,000</text>
<text transform="translate(2084.95,1199.15) scale(1.0000,1)" font-size="21.00" font-weight="normal" fill="#f0f0f0" stroke="#f0f0f0" stroke-width="0.25" >6595,000</text>
<text transform="translate(879.31,1234.60) scale(1.0142,1)" font-size="22.00" font-weight="bold" fill="#f2f2f2" >ΔE 2000</text>
<text transform="translate(1078.16,1234.60) scale(1.0000,1)" font-size="21.00" font-weight="normal" fill="#f0f0f0" stroke="#f0f0f0" stroke-width="0.25" >0,362</text>
<text transform="translate(1178.65,1234.60) scale(1.0000,1)" font-size="21.00" font-weight="normal" fill="#f0f0f0" stroke="#f0f0f0" stroke-width="0.25" >2,757</text>
<text transform="translate(1278.83,1234.60) scale(1.0000,1)" font-size="21.00" font-weight="normal" fill="#f0f0f0" stroke="#f0f0f0" stroke-width="0.25" >1,768</text>
<text transform="translate(1379.52,1234.60) scale(1.0000,1)" font-size="21.00" font-weight="normal" fill="#f0f0f0" stroke="#f0f0f0" stroke-width="0.25" >1,148</text>
<text transform="translate(1480.22,1234.60) scale(1.0000,1)" font-size="21.00" font-weight="normal" fill="#f0f0f0" stroke="#f0f0f0" stroke-width="0.25" >1,739</text>
<text transform="translate(1580.92,1234.60) scale(1.0000,1)" font-size="21.00" font-weight="normal" fill="#f0f0f0" stroke="#f0f0f0" stroke-width="0.25" >1,595</text>
<text transform="translate(1682.36,1234.60) scale(1.0000,1)" font-size="21.00" font-weight="normal" fill="#f0f0f0" stroke="#f0f0f0" stroke-width="0.25" >0,829</text>
<text transform="translate(1783.06,1234.60) scale(1.0000,1)" font-size="21.00" font-weight="normal" fill="#f0f0f0" stroke="#f0f0f0" stroke-width="0.25" >0,949</text>
<text transform="translate(1883.02,1234.60) scale(1.0000,1)" font-size="21.00" font-weight="normal" fill="#f0f0f0" stroke="#f0f0f0" stroke-width="0.25" >1,385</text>
<text transform="translate(1984.46,1234.60) scale(1.0000,1)" font-size="21.00" font-weight="normal" fill="#f0f0f0" stroke="#f0f0f0" stroke-width="0.25" >0,875</text>
<text transform="translate(2085.16,1234.60) scale(1.0000,1)" font-size="21.00" font-weight="normal" fill="#f0f0f0" stroke="#f0f0f0" stroke-width="0.25" >0,786</text>
<text transform="translate(73.60,1385.50) scale(1.0000,1)" font-size="12.14" font-weight="normal" fill="#2a2a2a" stroke="#2a2a2a" stroke-width="0.15" >0</text>
<text transform="translate(222.02,1385.50) scale(1.0000,1)" font-size="12.14" font-weight="normal" fill="#2a2a2a" stroke="#2a2a2a" stroke-width="0.15" >10</text>
<text transform="translate(374.17,1385.50) scale(1.0000,1)" font-size="12.14" font-weight="normal" fill="#2a2a2a" stroke="#2a2a2a" stroke-width="0.15" >20</text>
<text transform="translate(526.23,1385.50) scale(1.0000,1)" font-size="12.14" font-weight="normal" fill="#2a2a2a" stroke="#2a2a2a" stroke-width="0.15" >30</text>
<text transform="translate(678.35,1385.50) scale(1.0000,1)" font-size="12.14" font-weight="normal" fill="#2a2a2a" stroke="#2a2a2a" stroke-width="0.15" >40</text>
<text transform="translate(830.23,1385.50) scale(1.0000,1)" font-size="12.14" font-weight="normal" fill="#2a2a2a" stroke="#2a2a2a" stroke-width="0.15" >50</text>
<text transform="translate(982.17,1385.50) scale(1.0000,1)" font-size="12.14" font-weight="normal" fill="#2a2a2a" stroke="#2a2a2a" stroke-width="0.15" >60</text>
<text transform="translate(1134.17,1385.50) scale(1.0000,1)" font-size="12.14" font-weight="normal" fill="#2a2a2a" stroke="#2a2a2a" stroke-width="0.15" >70</text>
<text transform="translate(1286.20,1385.50) scale(1.0000,1)" font-size="12.14" font-weight="normal" fill="#2a2a2a" stroke="#2a2a2a" stroke-width="0.15" >80</text>
<text transform="translate(1438.20,1385.50) scale(1.0000,1)" font-size="12.14" font-weight="normal" fill="#2a2a2a" stroke="#2a2a2a" stroke-width="0.15" >90</text>
<text transform="translate(1586.77,1385.50) scale(1.0000,1)" font-size="12.14" font-weight="bold" fill="#fff" >100</text>
<text transform="translate(2074.62,1383.00) scale(0.9181,1)" font-size="23.19" font-weight="bold" fill="#2e2e2e" >Back</text>
<text transform="translate(2180.39,1383.00) scale(1.0668,1)" font-size="23.19" font-weight="bold" fill="#2e2e2e" >Next</text>
</svg>
</body></html>
